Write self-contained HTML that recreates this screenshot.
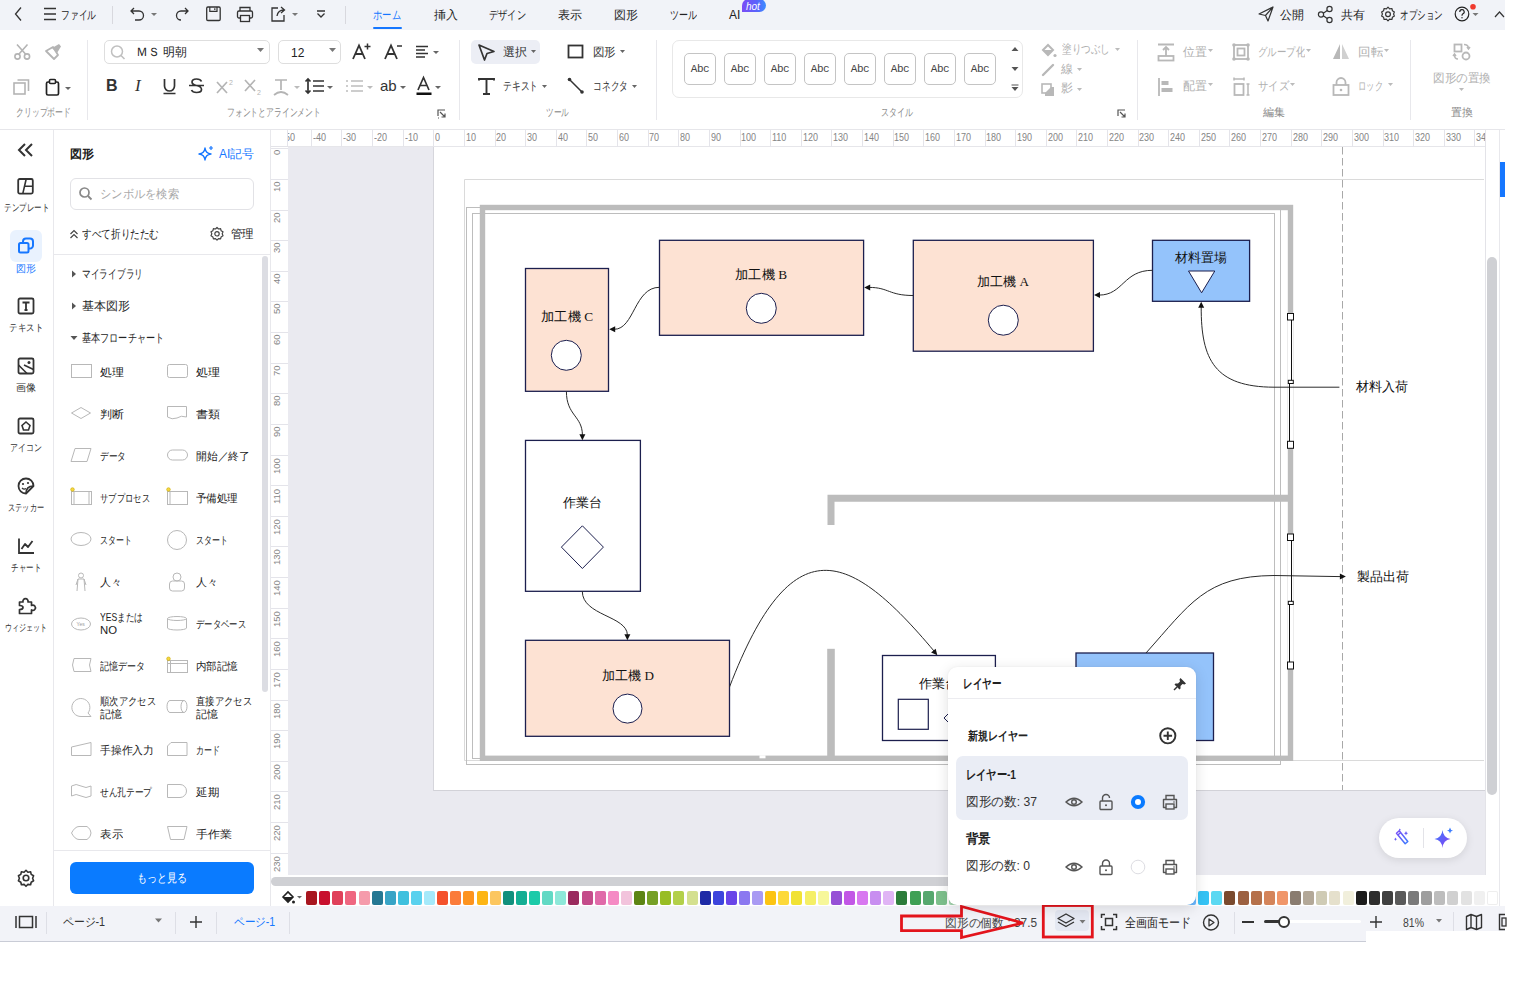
<!DOCTYPE html>
<html><head><meta charset="utf-8">
<style>
*{box-sizing:border-box;margin:0;padding:0}
html,body{width:1513px;height:992px;overflow:hidden;background:#fff;font-family:"Liberation Sans",sans-serif;color:#333}
.a{position:absolute}
.t{position:absolute;white-space:nowrap;line-height:1}
svg{position:absolute;overflow:visible}
#top{left:0;top:0;width:1505px;height:30px;background:#f1f3f8}
#rib{left:0;top:30px;width:1505px;height:100px;background:#fff;border-bottom:1px solid #e6e6ea}
#side{left:0;top:130px;width:54px;height:776px;background:#fff;border-right:1px solid #e8e8ec}
#panel{left:54px;top:130px;width:217px;height:776px;background:#fff;border-right:1px solid #e8e8ec}
#rulT{left:271px;top:129px;width:1214px;height:19px;background:#fff;border-top:1px solid #e6e6ea;border-bottom:2px solid #e6e6ea}
#rulL{left:271px;top:147px;width:18px;height:728px;background:#fff;border-right:1px solid #e3e3e8}
#cv{left:288px;top:147px;width:1197px;height:728px;background:#eaeaf0}
#page{left:433px;top:147px;width:1052px;height:644px;background:#fff;border-left:1px solid #d6d6dc;border-bottom:1px solid #d2d2d8}
#vsb{left:1485px;top:147px;width:14px;height:728px;background:#fff}
#rp{left:1499px;top:130px;width:6px;height:776px;background:#fff;border-left:1px solid #e8e8ec}
#hsb{left:271px;top:875px;width:1214px;height:14px;background:#fff}
#pal{left:271px;top:889px;width:1228px;height:17px;background:#fff}
#stat{left:0;top:906px;width:1505px;height:36px;background:#f2f3f8;border-bottom:1px solid #c9ccd6}
.m13{font-size:12px;color:#222}
.r12{font-size:12px;color:#333}
.dd{position:absolute;width:0;height:0;border-left:3px solid transparent;border-right:3px solid transparent;border-top:4px solid #666}
.lbl{font-size:11px;color:#8a8a8a}
.dis{color:#b0b0b0}
</style></head><body>

<div id="top" class="a"></div>
<!-- back chevron -->
<svg style="left:0;top:0" width="30" height="30"><path d="M21 7.5 L15.5 14 L21 20.5" fill="none" stroke="#333" stroke-width="1.3"/></svg>
<svg style="left:40px;top:0" width="20" height="30"><path d="M4 8.5H16M4 14H16M4 19.5H16" stroke="#333" stroke-width="1.4"/></svg>
<div class="t m13" style="left:61px;top:9px;transform:scaleX(0.729);transform-origin:0 0" id="tw1">ファイル</div>
<div class="a" style="left:112px;top:6px;width:1px;height:18px;background:#d8d8de"></div>
<svg style="left:128px;top:0" width="40" height="30"><path d="M6 8 L3 11 L6 14 M3 11 H11 A4.5 4.5 0 0 1 11 20 H7" fill="none" stroke="#333" stroke-width="1.3"/><path d="M23 13 l3 3 l3 -3z" fill="#777"/></svg>
<svg style="left:172px;top:0" width="20" height="30"><path d="M13 8 L16 11 L13 14 M16 11 H9 A4.5 4.5 0 0 0 9 20" fill="none" stroke="#333" stroke-width="1.3"/></svg>
<svg style="left:204px;top:0" width="20" height="30"><rect x="2.7" y="7" width="13.5" height="13.5" rx="1.2" fill="none" stroke="#333" stroke-width="1.3"/><path d="M5.8 7 V11.3 H13 V7 M10.8 8.3 V10" fill="none" stroke="#333" stroke-width="1.2"/></svg>
<svg style="left:235px;top:0" width="20" height="30"><path d="M5 11V7.5H15V11" fill="none" stroke="#333" stroke-width="1.3"/><rect x="2.5" y="11" width="15" height="7" rx="1.5" fill="none" stroke="#333" stroke-width="1.3"/><rect x="5.5" y="15.5" width="9" height="6" fill="#f1f3f8" stroke="#333" stroke-width="1.3"/></svg>
<svg style="left:268px;top:0" width="34" height="30"><path d="M10 8 H4 V21 H16 V15" fill="none" stroke="#333" stroke-width="1.3"/><path d="M9 16 Q10 10 16 10 M13 7 L16.5 10 L13 13" fill="none" stroke="#333" stroke-width="1.3"/><path d="M24 13 l3 3 l3 -3z" fill="#777"/></svg>
<svg style="left:313px;top:0" width="16" height="30"><path d="M4 11 H12 M4.5 13.5 L8 17 L11.5 13.5" fill="none" stroke="#333" stroke-width="1.3"/></svg>
<div class="a" style="left:345px;top:6px;width:1px;height:18px;background:#d8d8de"></div>
<div class="t m13" style="left:373px;top:9px;color:#1677ff;transform:scaleX(0.778);transform-origin:0 0" id="tw2">ホーム</div>
<div class="a" style="left:373px;top:27px;width:29px;height:2px;background:#1677ff;border-radius:1px"></div>
<div class="t m13" style="left:434px;top:9px">挿入</div>
<div class="t m13" style="left:489px;top:9px;transform:scaleX(0.771);transform-origin:0 0" id="tw3">デザイン</div>
<div class="t m13" style="left:558px;top:9px">表示</div>
<div class="t m13" style="left:614px;top:9px">図形</div>
<div class="t m13" style="left:670px;top:9px;transform:scaleX(0.750);transform-origin:0 0" id="tw4">ツール</div>
<div class="t m13" style="left:729px;top:9px">AI</div>
<div class="a" style="left:742px;top:-1px;width:24px;height:13px;background:linear-gradient(90deg,#7b4df6,#5a62fb 60%,#3b8dff);border-radius:7px 7px 7px 0"></div>
<div class="t" style="left:746px;top:1.5px;font-size:10px;font-style:italic;color:#fff">hot</div>
<!-- right -->
<svg style="left:1256px;top:0" width="20" height="30"><path d="M3 14 L17 7 L12 21 L9.5 15.5 Z M9.5 15.5 L17 7" fill="none" stroke="#333" stroke-width="1.2" stroke-linejoin="round"/></svg>
<div class="t m13" style="left:1280px;top:9px">公開</div>
<svg style="left:1316px;top:0" width="20" height="30"><circle cx="5" cy="14.5" r="2.6" fill="none" stroke="#333" stroke-width="1.2"/><circle cx="13.5" cy="9" r="2.6" fill="none" stroke="#333" stroke-width="1.2"/><circle cx="13.5" cy="20" r="2.6" fill="none" stroke="#333" stroke-width="1.2"/><path d="M7.3 13.2 L11.2 10.4 M7.3 15.8 L11.2 18.6" stroke="#333" stroke-width="1.2"/></svg>
<div class="t m13" style="left:1341px;top:9px">共有</div>
<svg style="left:1378px;top:0" width="20" height="30"><path d="M10 7.2 l1.6 1.6 2.3-.3 .5 2.2 2 1.2-.8 2.1 .8 2.1-2 1.2-.5 2.2-2.3-.3-1.6 1.6-1.6-1.6-2.3.3-.5-2.2-2-1.2 .8-2.1-.8-2.1 2-1.2 .5-2.2 2.3 .3z" fill="none" stroke="#333" stroke-width="1.2" stroke-linejoin="round"/><circle cx="10" cy="14.2" r="2.4" fill="none" stroke="#333" stroke-width="1.2"/></svg>
<div class="t m13" style="left:1400px;top:9px;transform:scaleX(0.717);transform-origin:0 0" id="tw5">オプション</div>
<svg style="left:1450px;top:0" width="34" height="30"><circle cx="12" cy="14" r="6.8" fill="none" stroke="#222" stroke-width="1.2"/><path d="M9.8 12 A2.2 2.2 0 1 1 12.6 14 Q12 14.5 12 15.8" fill="none" stroke="#222" stroke-width="1.2"/><circle cx="12" cy="17.8" r=".7" fill="#222"/><circle cx="23" cy="6.7" r="2.8" fill="#f03a2e"/><path d="M22.5 13 l3 3 l3 -3z" fill="#777"/></svg>
<svg style="left:1494px;top:0" width="12" height="30"><path d="M1 17 L5.5 12 L10 17" fill="none" stroke="#333" stroke-width="1.2"/></svg>

<div id="rib" class="a"></div>
<!-- clipboard -->
<svg style="left:12px;top:42px" width="22" height="20"><circle cx="5.5" cy="14.5" r="2.6" fill="none" stroke="#b4b4b4" stroke-width="1.6"/><circle cx="15" cy="14.5" r="2.6" fill="none" stroke="#b4b4b4" stroke-width="1.6"/><path d="M6.8 12.3 L15.5 2.5 M13.7 12.3 L5 2.5" stroke="#b4b4b4" stroke-width="1.6"/></svg>
<svg style="left:43px;top:42px" width="22" height="20"><path d="M3 9 L10 5 L15 13 L11 17 Z" fill="none" stroke="#b4b4b4" stroke-width="1.8" stroke-linejoin="round"/><path d="M9 6 L16 2 L18 4.5 L14 11 Z" fill="#b4b4b4"/></svg>
<svg style="left:12px;top:77px" width="20" height="20"><rect x="2" y="6" width="11" height="11" fill="none" stroke="#b4b4b4" stroke-width="1.6"/><path d="M5.5 3 H16.5 V14" fill="none" stroke="#b4b4b4" stroke-width="1.6"/></svg>
<svg style="left:44px;top:77px" width="30" height="20"><rect x="2.5" y="5" width="12" height="13" rx="1.5" fill="none" stroke="#222" stroke-width="1.7"/><rect x="5.5" y="2.5" width="6" height="4" rx="1" fill="#fff" stroke="#222" stroke-width="1.6"/><path d="M21 10 l3 3 l3-3z" fill="#666"/></svg>
<div class="t lbl" style="left:16px;top:107px;transform:scaleX(0.714);transform-origin:0 0" id="tw6">クリップボード</div>
<div class="a" style="left:87px;top:40px;width:1px;height:80px;background:#e8e8ec"></div>
<!-- font -->
<div class="a" style="left:104px;top:40px;width:166px;height:24px;border:1px solid #dedede;border-radius:5px"></div>
<svg style="left:108px;top:42px" width="20" height="20"><circle cx="9" cy="9.5" r="5.5" fill="none" stroke="#c0c0c0" stroke-width="1.5"/><path d="M13 13.5 L16.5 17" stroke="#c0c0c0" stroke-width="1.6"/></svg>
<div class="t r12" style="left:136px;top:46px;color:#222;transform:scaleX(0.993);transform-origin:0 0" id="tw7">ＭＳ 明朝</div>
<svg style="left:256px;top:46px" width="10" height="8"><path d="M1 2 h7 l-3.5 4z" fill="#777"/></svg>
<div class="a" style="left:278px;top:40px;width:63px;height:24px;border:1px solid #dedede;border-radius:5px"></div>
<div class="t r12" style="left:291px;top:47px;color:#222">12</div>
<svg style="left:328px;top:46px" width="10" height="8"><path d="M1 2 h7 l-3.5 4z" fill="#777"/></svg>
<svg style="left:350px;top:42px" width="24" height="20"><path d="M3 17 L9 3.5 L15 17 M5.5 12 H12.5" fill="none" stroke="#333" stroke-width="1.8"/><path d="M17.5 1.5 v6 M14.5 4.5 h6" stroke="#333" stroke-width="1.5"/></svg>
<svg style="left:382px;top:42px" width="24" height="20"><path d="M3 17 L9 3.5 L15 17 M5.5 12 H12.5" fill="none" stroke="#333" stroke-width="1.8"/><path d="M15 4 h5" stroke="#333" stroke-width="1.5"/></svg>
<svg style="left:414px;top:42px" width="30" height="20"><path d="M2 4.5 H14 M2 8 H11 M2 11.5 H14 M2 15 H11" stroke="#333" stroke-width="1.6"/><path d="M19 9 l3 3 l3-3z" fill="#666"/></svg>
<!-- row2 -->
<div class="t" style="left:106px;top:78px;font-size:16px;font-weight:bold;color:#333">B</div>
<div class="t" style="left:135px;top:77px;font-size:17px;font-style:italic;font-family:'Liberation Serif',serif;color:#333">I</div>
<svg style="left:160px;top:76px" width="20" height="20"><path d="M4.5 3 V10 A5 5 0 0 0 14.5 10 V3 M3.5 17.5 H15.5" fill="none" stroke="#333" stroke-width="1.7"/></svg>
<svg style="left:187px;top:76px" width="20" height="20"><path d="M14.5 5.5 Q13.5 3 9.5 3 Q5 3 5 6 Q5 8.5 9.5 9.5 Q14.5 10.5 14.5 13.5 Q14.5 16.5 9.5 16.5 Q5.5 16.5 4.5 14 M2 9.5 H17" fill="none" stroke="#333" stroke-width="1.7"/></svg>
<svg style="left:214px;top:76px" width="22" height="20"><path d="M3 6 L13 17 M13 6 L3 17" stroke="#b4b4b4" stroke-width="1.7"/><text x="15" y="9" font-size="7" fill="#b4b4b4" font-family="Liberation Sans">2</text></svg>
<svg style="left:242px;top:76px" width="22" height="20"><path d="M3 4 L13 15 M13 4 L3 15" stroke="#b4b4b4" stroke-width="1.7"/><text x="15" y="19" font-size="7" fill="#b4b4b4" font-family="Liberation Sans">2</text></svg>
<svg style="left:272px;top:76px" width="30" height="22"><path d="M3 4 H15 M9 4 V14 M2 19 Q9 13 16 19" fill="none" stroke="#b4b4b4" stroke-width="1.7"/><path d="M22 10 l3 3 l3-3z" fill="#bbb"/></svg>
<svg style="left:304px;top:76px" width="30" height="22"><path d="M4 3 V17 M1.5 5.5 L4 3 L6.5 5.5 M1.5 14.5 L4 17 L6.5 14.5 M9 5 H20 M9 10 H20 M9 15 H20" fill="none" stroke="#333" stroke-width="1.7"/><path d="M23 10 l3 3 l3-3z" fill="#666"/></svg>
<svg style="left:343px;top:76px" width="30" height="22"><path d="M3 5 H5 M3 10 H5 M3 15 H5 M8 5 H20 M8 10 H20 M8 15 H20" fill="none" stroke="#bdbdbd" stroke-width="1.7"/><path d="M24 10 l3 3 l3-3z" fill="#bbb"/></svg>
<div class="t" style="left:380px;top:78px;font-size:15px;color:#333">ab</div>
<svg style="left:398px;top:76px" width="10" height="20"><path d="M2 10 l3 3 l3-3z" fill="#666"/></svg>
<svg style="left:414px;top:74px" width="30" height="24"><path d="M4 16 L9.5 3.5 L15 16 M6 11.5 H13" fill="none" stroke="#333" stroke-width="1.7"/><rect x="2.5" y="18.5" width="15" height="2.5" fill="#111"/><path d="M21 12 l3 3 l3-3z" fill="#666"/></svg>
<div class="t lbl" style="left:227px;top:107px;transform:scaleX(0.712);transform-origin:0 0" id="tw8">フォントとアラインメント</div>
<svg style="left:436px;top:108px" width="12" height="12"><path d="M2 8 V2 H9 M4 4 L9 9 M9 5.5 V9 H5.5 M2 10 H3" fill="none" stroke="#555" stroke-width="1.2"/></svg>
<div class="a" style="left:459px;top:40px;width:1px;height:80px;background:#e8e8ec"></div>
<!-- tools -->
<div class="a" style="left:471px;top:40px;width:69px;height:24px;background:#eceef5;border-radius:5px"></div>
<svg style="left:476px;top:42px" width="22" height="20"><path d="M3 3 L18 9.5 L11 11.5 L8.5 18 Z" fill="none" stroke="#333" stroke-width="1.7" stroke-linejoin="round"/></svg>
<div class="t r12" style="left:503px;top:46px;transform:scaleX(1.000);transform-origin:0 0" id="tw9">選択</div>
<svg style="left:530px;top:48px" width="8" height="8"><path d="M1 2 h5 l-2.5 3z" fill="#666"/></svg>
<svg style="left:565px;top:42px" width="22" height="20"><rect x="3.5" y="3.5" width="14" height="12" fill="none" stroke="#333" stroke-width="1.8"/></svg>
<div class="t r12" style="left:593px;top:46px;transform:scaleX(0.958);transform-origin:0 0" id="tw10">図形</div>
<svg style="left:619px;top:48px" width="8" height="8"><path d="M1 2 h5 l-2.5 3z" fill="#666"/></svg>
<svg style="left:476px;top:76px" width="22" height="22"><path d="M3 4.5 V3 H18 V4.5 M10.5 3 V18 M7 18 H14" fill="none" stroke="#333" stroke-width="1.9"/></svg>
<div class="t r12" style="left:503px;top:80px;transform:scaleX(0.729);transform-origin:0 0" id="tw11">テキスト</div>
<svg style="left:541px;top:83px" width="8" height="8"><path d="M1 2 h5 l-2.5 3z" fill="#666"/></svg>
<svg style="left:566px;top:76px" width="22" height="22"><path d="M3.5 3.5 L16 16" stroke="#333" stroke-width="1.5"/><circle cx="3.5" cy="3.5" r="1.8" fill="#333"/><circle cx="16" cy="16" r="1.8" fill="#333"/></svg>
<div class="t r12" style="left:593px;top:80px;transform:scaleX(0.729);transform-origin:0 0" id="tw12">コネクタ</div>
<svg style="left:631px;top:83px" width="8" height="8"><path d="M1 2 h5 l-2.5 3z" fill="#666"/></svg>
<div class="t lbl" style="left:546px;top:107px;transform:scaleX(0.697);transform-origin:0 0" id="tw13">ツール</div>
<div class="a" style="left:656px;top:40px;width:1px;height:80px;background:#e8e8ec"></div>
<!-- style -->
<div class="a" style="left:672px;top:40px;width:351px;height:58px;border:1px solid #e8e8e8;border-radius:7px"></div>
<div class="a" style="left:684px;top:53px;width:32px;height:32px;border:1px solid #c4c4c4;border-radius:5px;font-family:'Liberation Mono',monospace;font-size:11px;color:#444;text-align:center;line-height:30px;letter-spacing:-0.5px">Abc</div><div class="a" style="left:724px;top:53px;width:32px;height:32px;border:1px solid #c4c4c4;border-radius:5px;font-family:'Liberation Mono',monospace;font-size:11px;color:#444;text-align:center;line-height:30px;letter-spacing:-0.5px">Abc</div><div class="a" style="left:764px;top:53px;width:32px;height:32px;border:1px solid #c4c4c4;border-radius:5px;font-family:'Liberation Mono',monospace;font-size:11px;color:#444;text-align:center;line-height:30px;letter-spacing:-0.5px">Abc</div><div class="a" style="left:804px;top:53px;width:32px;height:32px;border:1px solid #c4c4c4;border-radius:5px;font-family:'Liberation Mono',monospace;font-size:11px;color:#444;text-align:center;line-height:30px;letter-spacing:-0.5px">Abc</div><div class="a" style="left:844px;top:53px;width:32px;height:32px;border:1px solid #c4c4c4;border-radius:5px;font-family:'Liberation Mono',monospace;font-size:11px;color:#444;text-align:center;line-height:30px;letter-spacing:-0.5px">Abc</div><div class="a" style="left:884px;top:53px;width:32px;height:32px;border:1px solid #c4c4c4;border-radius:5px;font-family:'Liberation Mono',monospace;font-size:11px;color:#444;text-align:center;line-height:30px;letter-spacing:-0.5px">Abc</div><div class="a" style="left:924px;top:53px;width:32px;height:32px;border:1px solid #c4c4c4;border-radius:5px;font-family:'Liberation Mono',monospace;font-size:11px;color:#444;text-align:center;line-height:30px;letter-spacing:-0.5px">Abc</div><div class="a" style="left:964px;top:53px;width:32px;height:32px;border:1px solid #c4c4c4;border-radius:5px;font-family:'Liberation Mono',monospace;font-size:11px;color:#444;text-align:center;line-height:30px;letter-spacing:-0.5px">Abc</div>
<svg style="left:1010px;top:44px" width="10" height="50"><path d="M1.5 7 h7 l-3.5 -4z M1.5 23 h7 l-3.5 4z M1.5 41 h7 M1.5 43 h7 l-3.5 4z" fill="#555" stroke="none"/><path d="M1.5 41 h7" stroke="#555" stroke-width="1"/></svg>
<svg style="left:1040px;top:42px" width="18" height="18"><path d="M3 8 L8 3 L13 8 L8 13 Z" fill="none" stroke="#b8b8b8" stroke-width="2"/><path d="M3 8 H13 L8 13Z" fill="#b8b8b8"/><circle cx="15" cy="13.5" r="1.6" fill="#b8b8b8"/></svg>
<div class="t r12 dis" style="left:1062px;top:43px;transform:scaleX(0.800);transform-origin:0 0" id="tw14">塗りつぶし</div>
<svg style="left:1114px;top:46px" width="8" height="8"><path d="M1 2 h5 l-2.5 3z" fill="#bbb"/></svg>
<svg style="left:1040px;top:62px" width="18" height="16"><path d="M3 13 L13 3" stroke="#b8b8b8" stroke-width="2.4" stroke-linecap="round"/></svg>
<div class="t r12 dis" style="left:1061px;top:63px">線</div>
<svg style="left:1076px;top:66px" width="8" height="8"><path d="M1 2 h5 l-2.5 3z" fill="#bbb"/></svg>
<svg style="left:1040px;top:82px" width="18" height="16"><rect x="2" y="2" width="9" height="9" fill="none" stroke="#b8b8b8" stroke-width="1.6"/><path d="M11 5 H14 V14 H5 V11" fill="#b8b8b8"/></svg>
<div class="t r12 dis" style="left:1061px;top:82px">影</div>
<svg style="left:1076px;top:86px" width="8" height="8"><path d="M1 2 h5 l-2.5 3z" fill="#bbb"/></svg>
<div class="t lbl" style="left:881px;top:107px;transform:scaleX(0.727);transform-origin:0 0" id="tw15">スタイル</div>
<svg style="left:1116px;top:108px" width="12" height="12"><path d="M2 8 V2 H9 M4 4 L9 9 M9 5.5 V9 H5.5" fill="none" stroke="#555" stroke-width="1.2"/></svg>
<div class="a" style="left:1137px;top:40px;width:1px;height:80px;background:#e8e8ec"></div>
<!-- edit -->
<svg style="left:1156px;top:42px" width="20" height="20"><path d="M2 2.5 H18 M10 14 V5.5 M7 8 L10 5 L13 8" fill="none" stroke="#b8b8b8" stroke-width="1.8"/><rect x="2.5" y="14" width="15" height="4.5" fill="none" stroke="#b8b8b8" stroke-width="1.8"/></svg>
<div class="t r12 dis" style="left:1183px;top:46px;transform:scaleX(1.000);transform-origin:0 0" id="tw16">位置</div>
<svg style="left:1207px;top:47px" width="8" height="8"><path d="M1 2 h5 l-2.5 3z" fill="#bbb"/></svg>
<svg style="left:1231px;top:42px" width="20" height="20"><rect x="3" y="3" width="14" height="14" fill="none" stroke="#b8b8b8" stroke-width="1.8"/><rect x="6.5" y="6.5" width="7" height="7" fill="none" stroke="#b8b8b8" stroke-width="1.8"/><circle cx="3" cy="3" r="1.8" fill="#b8b8b8"/><circle cx="17" cy="3" r="1.8" fill="#b8b8b8"/><circle cx="3" cy="17" r="1.8" fill="#b8b8b8"/><circle cx="17" cy="17" r="1.8" fill="#b8b8b8"/></svg>
<div class="t r12 dis" style="left:1258px;top:46px;transform:scaleX(0.783);transform-origin:0 0" id="tw17">グループ化</div>
<svg style="left:1305px;top:47px" width="8" height="8"><path d="M1 2 h5 l-2.5 3z" fill="#bbb"/></svg>
<svg style="left:1331px;top:42px" width="20" height="20"><path d="M9 2 V17 H2 Z" fill="#b8b8b8"/><path d="M11 2 V17 H18 Z" fill="#d0d0d0"/></svg>
<div class="t r12 dis" style="left:1358px;top:46px;transform:scaleX(1.042);transform-origin:0 0" id="tw18">回転</div>
<svg style="left:1383px;top:47px" width="8" height="8"><path d="M1 2 h5 l-2.5 3z" fill="#bbb"/></svg>
<svg style="left:1156px;top:76px" width="20" height="22"><path d="M3 2 V20" stroke="#b8b8b8" stroke-width="1.8"/><rect x="5.5" y="5" width="7" height="4" fill="#b8b8b8"/><rect x="5.5" y="12" width="11" height="4" fill="#b8b8b8"/></svg>
<div class="t r12 dis" style="left:1183px;top:80px;transform:scaleX(1.000);transform-origin:0 0" id="tw19">配置</div>
<svg style="left:1207px;top:81px" width="8" height="8"><path d="M1 2 h5 l-2.5 3z" fill="#bbb"/></svg>
<svg style="left:1232px;top:76px" width="20" height="22"><path d="M2 3 H12 M2 1.5 V4.5 M12 1.5 V4.5" stroke="#b8b8b8" stroke-width="1.5"/><rect x="2.5" y="8" width="9" height="11" fill="none" stroke="#b8b8b8" stroke-width="1.8"/><path d="M16 8 V19 M14.5 8 H17.5 M14.5 19 H17.5" stroke="#b8b8b8" stroke-width="1.5"/></svg>
<div class="t r12 dis" style="left:1258px;top:80px;transform:scaleX(0.861);transform-origin:0 0" id="tw20">サイズ</div>
<svg style="left:1289px;top:81px" width="8" height="8"><path d="M1 2 h5 l-2.5 3z" fill="#bbb"/></svg>
<svg style="left:1331px;top:76px" width="20" height="22"><path d="M5.5 9 V6.5 A4.5 4.5 0 0 1 14.5 6.5 V9" fill="none" stroke="#b8b8b8" stroke-width="1.8"/><rect x="2.5" y="9" width="15" height="10" fill="none" stroke="#b8b8b8" stroke-width="1.8"/><circle cx="10" cy="14" r="1.3" fill="#b8b8b8"/></svg>
<div class="t r12 dis" style="left:1358px;top:80px;transform:scaleX(0.694);transform-origin:0 0" id="tw21">ロック</div>
<svg style="left:1387px;top:81px" width="8" height="8"><path d="M1 2 h5 l-2.5 3z" fill="#bbb"/></svg>
<div class="t lbl" style="left:1263px;top:107px;transform:scaleX(1.000);transform-origin:0 0" id="tw22">編集</div>
<div class="a" style="left:1410px;top:40px;width:1px;height:80px;background:#e8e8ec"></div>
<svg style="left:1452px;top:42px" width="22" height="20"><rect x="2.5" y="2.5" width="7" height="7" fill="none" stroke="#b8b8b8" stroke-width="1.8"/><circle cx="14" cy="14" r="3.5" fill="none" stroke="#b8b8b8" stroke-width="1.8"/><path d="M12 2.5 Q16 2.5 16.5 6 M15 5 L16.5 7 L18 5 M6 17 Q2.5 17 2.5 13 M4 14 L2.5 12 L1 14" fill="none" stroke="#b8b8b8" stroke-width="1.5"/></svg>
<div class="t r12 dis" style="left:1433px;top:72px;transform:scaleX(0.967);transform-origin:0 0" id="tw23">図形の置換</div>
<svg style="left:1458px;top:86px" width="8" height="8"><path d="M1 2 h5 l-2.5 3z" fill="#bbb"/></svg>
<div class="t lbl" style="left:1451px;top:107px;transform:scaleX(1.000);transform-origin:0 0" id="tw24">置換</div>

<div id="side" class="a"></div>
<svg style="left:16px;top:142px" width="20" height="16"><path d="M9 2 L3 8 L9 14 M16 2 L10 8 L16 14" fill="none" stroke="#333" stroke-width="2"/></svg>
<svg style="left:16px;top:176px" width="20" height="20"><rect x="2.2" y="3" width="14.6" height="14.6" rx="1.5" fill="none" stroke="#333" stroke-width="1.8"/><path d="M10.2 3 L6.8 17.6 M8.6 10.3 H16.8" fill="none" stroke="#333" stroke-width="1.6"/></svg>
<div class="t" style="left:4px;top:203px;font-size:10px;color:#333;transform:scaleX(0.750);transform-origin:0 0" id="tw25">テンプレート</div>
<div class="a" style="left:10px;top:230px;width:32px;height:32px;background:#e9f2fe;border-radius:6px"></div>
<svg style="left:16px;top:236px" width="20" height="20"><rect x="3" y="7" width="9.5" height="9.5" rx="1.5" fill="none" stroke="#1677ff" stroke-width="2"/><path d="M7 7 V5.5 A3 3 0 0 1 10 2.5 H14 A3 3 0 0 1 17 5.5 V9.5 A3 3 0 0 1 14 12.5 H12.5" fill="none" stroke="#1677ff" stroke-width="2"/></svg>
<div class="t" style="left:16px;top:264px;font-size:10px;color:#1677ff;transform:scaleX(1.000);transform-origin:0 0" id="tw26">図形</div>
<svg style="left:16px;top:296px" width="20" height="20"><rect x="2.5" y="2.5" width="15" height="15" rx="1.5" fill="none" stroke="#333" stroke-width="1.8"/><path d="M6.5 6.5 H13.5 M10 6.5 V14 M8.5 14 H11.5" fill="none" stroke="#333" stroke-width="1.8"/></svg>
<div class="t" style="left:9px;top:323px;font-size:10px;color:#333;transform:scaleX(0.850);transform-origin:0 0" id="tw27">テキスト</div>
<svg style="left:16px;top:356px" width="20" height="20"><rect x="2.5" y="2.5" width="15" height="15" rx="1.5" fill="none" stroke="#333" stroke-width="1.8"/><path d="M2.5 9 L11 17.5 M8 9 L17.5 13.5" fill="none" stroke="#333" stroke-width="1.6"/><circle cx="13" cy="6.5" r="1.5" fill="#333"/></svg>
<div class="t" style="left:16px;top:383px;font-size:10px;color:#333;transform:scaleX(1.000);transform-origin:0 0" id="tw28">画像</div>
<svg style="left:16px;top:416px" width="20" height="20"><rect x="2.5" y="2.5" width="15" height="15" rx="1.5" fill="none" stroke="#333" stroke-width="1.8"/><path d="M10 6 L14 9.5 L12.5 14 H7.5 L6 9.5 Z" fill="none" stroke="#333" stroke-width="1.6"/></svg>
<div class="t" style="left:10px;top:443px;font-size:10px;color:#333;transform:scaleX(0.800);transform-origin:0 0" id="tw29">アイコン</div>
<svg style="left:16px;top:476px" width="20" height="20"><path d="M17.5 10 A7.5 7.5 0 1 0 10 17.5 L17.5 10 Z" fill="none" stroke="#333" stroke-width="1.8" stroke-linejoin="round"/><path d="M10 17.5 Q10 10 17.5 10" fill="none" stroke="#333" stroke-width="1.6"/><circle cx="7" cy="8" r="1.1" fill="#333"/><circle cx="12" cy="7" r="1.1" fill="#333"/><path d="M6 12 Q8 14 10 12.5" fill="none" stroke="#333" stroke-width="1.3"/></svg>
<div class="t" style="left:8px;top:503px;font-size:10px;color:#333;transform:scaleX(0.720);transform-origin:0 0" id="tw30">ステッカー</div>
<svg style="left:16px;top:536px" width="20" height="20"><path d="M3 2.5 V17 H18" fill="none" stroke="#333" stroke-width="1.8"/><path d="M5.5 13 L9 8 L12 11 L16.5 5" fill="none" stroke="#333" stroke-width="1.8" stroke-linejoin="round"/></svg>
<div class="t" style="left:11px;top:563px;font-size:10px;color:#333;transform:scaleX(0.750);transform-origin:0 0" id="tw31">チャート</div>
<svg style="left:16px;top:596px" width="20" height="20"><path d="M3.5 6 H7 A2.6 2.6 0 1 1 12 6 H15.5 V9.5 A2.6 2.6 0 1 1 15.5 14 V17.5 H3.5 V13.5 Q7 13.5 7 11.5 Q7 9.5 3.5 9.5 Z" fill="none" stroke="#333" stroke-width="1.7" stroke-linejoin="round"/></svg>
<div class="t" style="left:5px;top:623px;font-size:10px;color:#333;transform:scaleX(0.700);transform-origin:0 0" id="tw32">ウィジェット</div>
<svg style="left:16px;top:868px" width="20" height="20"><path d="M10 2.3 l1.9 1.9 2.7-.4 .6 2.6 2.4 1.4-1 2.5 1 2.5-2.4 1.4-.6 2.6-2.7-.4-1.9 1.9-1.9-1.9-2.7.4-.6-2.6-2.4-1.4 1-2.5-1-2.5 2.4-1.4 .6-2.6 2.7 .4z" fill="none" stroke="#333" stroke-width="1.6" stroke-linejoin="round"/><circle cx="10" cy="10" r="2.8" fill="none" stroke="#333" stroke-width="1.6"/></svg>

<div id="panel" class="a"></div>
<div class="t" style="left:70px;top:148px;font-size:12px;color:#222;font-weight:bold;transform:scaleX(1.000);transform-origin:0 0" id="tw33">図形</div>
<svg style="left:197px;top:145px" width="18" height="18"><path d="M8 3 Q8.6 8.4 14 9 Q8.6 9.6 8 15 Q7.4 9.6 2 9 Q7.4 8.4 8 3Z" fill="none" stroke="#1677ff" stroke-width="1.4" stroke-linejoin="round"/><path d="M14 1 v4 M12 3 h4" stroke="#1677ff" stroke-width="1.2"/></svg>
<div class="t" style="left:219px;top:148px;font-size:12px;color:#1677ff;transform:scaleX(0.990);transform-origin:0 0" id="tw34">AI記号</div>
<div class="a" style="left:70px;top:178px;width:184px;height:32px;border:1px solid #e2e2e6;border-radius:6px"></div>
<svg style="left:78px;top:186px" width="16" height="16"><circle cx="6.5" cy="6.5" r="4.5" fill="none" stroke="#888" stroke-width="1.7"/><path d="M10 10 L13.5 13.5" stroke="#888" stroke-width="1.8"/></svg>
<div class="t" style="left:100px;top:188px;font-size:12px;color:#aaa;transform:scaleX(0.940);transform-origin:0 0" id="tw35">シンボルを検索</div>
<svg style="left:68px;top:228px" width="12" height="12"><path d="M2.5 6 L6 2.5 L9.5 6 M2.5 10 L6 6.5 L9.5 10" fill="none" stroke="#444" stroke-width="1.2"/></svg>
<div class="t" style="left:82px;top:228px;font-size:12px;color:#222;transform:scaleX(0.802);transform-origin:0 0" id="tw36">すべて折りたたむ</div>
<svg style="left:209px;top:226px" width="16" height="16"><path d="M8 1.5 l1.5 1.5 2.1-.3 .5 2 1.9 1.1-.8 2 .8 2-1.9 1.1-.5 2-2.1-.3-1.5 1.5-1.5-1.5-2.1.3-.5-2-1.9-1.1 .8-2-.8-2 1.9-1.1 .5-2 2.1 .3z" fill="none" stroke="#444" stroke-width="1.2" stroke-linejoin="round"/><circle cx="8" cy="7.8" r="2.2" fill="none" stroke="#444" stroke-width="1.2"/></svg>
<div class="t" style="left:231px;top:228px;font-size:12px;color:#222;transform:scaleX(0.958);transform-origin:0 0" id="tw37">管理</div>
<div class="a" style="left:54px;top:254px;width:216px;height:1px;background:#e8e8ec"></div>
<div class="a" style="left:262px;top:256px;width:6px;height:436px;background:#dcdde3;border-radius:3px"></div>
<svg style="left:70px;top:269px" width="8" height="10"><path d="M2 1.5 L6 5 L2 8.5z" fill="#555"/></svg>
<div class="t" style="left:82px;top:268px;font-size:12px;color:#222;transform:scaleX(0.726);transform-origin:0 0" id="tw38">マイライブラリ</div>
<svg style="left:70px;top:301px" width="8" height="10"><path d="M2 1.5 L6 5 L2 8.5z" fill="#555"/></svg>
<div class="t" style="left:82px;top:300px;font-size:12px;color:#222;transform:scaleX(1.000);transform-origin:0 0" id="tw39">基本図形</div>
<svg style="left:69px;top:334px" width="10" height="8"><path d="M1.5 2 L8.5 2 L5 6z" fill="#555"/></svg>
<div class="t" style="left:82px;top:332px;font-size:12px;color:#222;transform:scaleX(0.759);transform-origin:0 0" id="tw40">基本フローチャート</div>
<svg style="left:70px;top:363px" width="24" height="20"><rect x="1.5" y="1.5" width="20" height="13" fill="none" stroke="#b8b8b8"/></svg>
<svg style="left:166px;top:363px" width="24" height="20"><rect x="1.5" y="1.5" width="20" height="13" rx="2" fill="none" stroke="#b8b8b8"/></svg>
<div class="t" style="left:100px;top:367px;font-size:11px;color:#222;transform:scaleX(1.091);transform-origin:0 0" id="tw41">処理</div>
<div class="t" style="left:196px;top:367px;font-size:11px;color:#222;transform:scaleX(1.091);transform-origin:0 0" id="tw42">処理</div>
<svg style="left:70px;top:405px" width="24" height="20"><path d="M1.5 8 L11 2.5 L20.5 8 L11 13.5Z" fill="none" stroke="#b8b8b8"/></svg>
<svg style="left:166px;top:405px" width="24" height="20"><path d="M1.5 1.5 H20.5 V12 Q15 10 11 13 Q6 15 1.5 12Z" fill="none" stroke="#b8b8b8"/></svg>
<div class="t" style="left:100px;top:409px;font-size:11px;color:#222;transform:scaleX(1.091);transform-origin:0 0" id="tw43">判断</div>
<div class="t" style="left:196px;top:409px;font-size:11px;color:#222;transform:scaleX(1.091);transform-origin:0 0" id="tw44">書類</div>
<svg style="left:70px;top:447px" width="24" height="20"><path d="M5 1.5 H21 L17 14.5 H1Z" fill="none" stroke="#b8b8b8"/></svg>
<svg style="left:166px;top:447px" width="24" height="20"><rect x="1.5" y="3" width="20" height="10" rx="5" fill="none" stroke="#b8b8b8"/></svg>
<div class="t" style="left:100px;top:451px;font-size:11px;color:#222;transform:scaleX(0.788);transform-origin:0 0" id="tw45">データ</div>
<div class="t" style="left:196px;top:451px;font-size:11px;color:#222;transform:scaleX(0.982);transform-origin:0 0" id="tw46">開始／終了</div>
<svg style="left:70px;top:488px" width="24" height="20"><rect x="1.5" y="3.5" width="20" height="13" fill="none" stroke="#b8b8b8"/><path d="M4 3.5 V16.5 M19 3.5 V16.5" stroke="#b8b8b8"/><circle cx="2.5" cy="1.5" r="1.8" fill="#f5d742" stroke="#c9a800" stroke-width=".6"/></svg>
<svg style="left:166px;top:488px" width="24" height="20"><rect x="1.5" y="3.5" width="20" height="13" fill="none" stroke="#b8b8b8"/><path d="M4 3.5 V16.5" stroke="#b8b8b8"/><circle cx="2.5" cy="1.5" r="1.8" fill="#f5d742" stroke="#c9a800" stroke-width=".6"/></svg>
<div class="t" style="left:100px;top:493px;font-size:11px;color:#222;transform:scaleX(0.758);transform-origin:0 0" id="tw47">サブプロセス</div>
<div class="t" style="left:196px;top:493px;font-size:11px;color:#222;transform:scaleX(0.955);transform-origin:0 0" id="tw48">予備処理</div>
<svg style="left:70px;top:531px" width="24" height="20"><ellipse cx="11" cy="8" rx="10" ry="6.5" fill="none" stroke="#b8b8b8"/></svg>
<svg style="left:166px;top:531px" width="24" height="20"><circle cx="11" cy="9" r="9.5" fill="none" stroke="#b8b8b8"/></svg>
<div class="t" style="left:100px;top:535px;font-size:11px;color:#222;transform:scaleX(0.727);transform-origin:0 0" id="tw49">スタート</div>
<div class="t" style="left:196px;top:535px;font-size:11px;color:#222;transform:scaleX(0.727);transform-origin:0 0" id="tw50">スタート</div>
<svg style="left:70px;top:572px" width="24" height="20"><circle cx="11" cy="3.5" r="2.5" fill="none" stroke="#b8b8b8"/><path d="M7 19 L8 7 H14 L15 19 M8 7 L6 13 M14 7 L16 13" fill="none" stroke="#b8b8b8"/></svg>
<svg style="left:166px;top:572px" width="24" height="20"><circle cx="11" cy="5" r="4" fill="none" stroke="#b8b8b8"/><rect x="3.5" y="9" width="15" height="10" rx="3" fill="none" stroke="#b8b8b8"/></svg>
<div class="t" style="left:100px;top:577px;font-size:11px;color:#222;transform:scaleX(1.000);transform-origin:0 0" id="tw51">人々</div>
<div class="t" style="left:196px;top:577px;font-size:11px;color:#222;transform:scaleX(1.000);transform-origin:0 0" id="tw52">人々</div>
<svg style="left:70px;top:615px" width="24" height="20"><ellipse cx="11" cy="9" rx="9.5" ry="6" fill="none" stroke="#b8b8b8"/><text x="6.5" y="11" font-size="5" fill="#999" font-family="Liberation Sans">Yes</text></svg>
<svg style="left:166px;top:615px" width="24" height="20"><ellipse cx="11" cy="3.5" rx="9.5" ry="2" fill="none" stroke="#b8b8b8"/><path d="M1.5 3.5 V13 A9.5 2 0 0 0 20.5 13 V3.5" fill="none" stroke="#b8b8b8"/></svg>
<div class="t" style="left:100px;top:612px;font-size:11px;color:#222;transform:scaleX(0.782);transform-origin:0 0" id="tw53">YESまたは</div>
<div class="t" style="left:100px;top:625px;font-size:11px;color:#222;transform:scaleX(1.030);transform-origin:0 0" id="tw54">NO</div>
<div class="t" style="left:196px;top:619px;font-size:11px;color:#222;transform:scaleX(0.758);transform-origin:0 0" id="tw55">データベース</div>
<svg style="left:70px;top:657px" width="24" height="20"><path d="M4 1.5 H21 Q18 8 21 14.5 H4 Q1 8 4 1.5Z" fill="none" stroke="#b8b8b8"/></svg>
<svg style="left:166px;top:657px" width="24" height="20"><rect x="1.5" y="3.5" width="20" height="12" fill="none" stroke="#b8b8b8"/><path d="M1.5 6.5 H21.5 M4.5 3.5 V15.5" stroke="#b8b8b8"/><circle cx="2.5" cy="1.8" r="1.8" fill="#f5d742" stroke="#c9a800" stroke-width=".6"/></svg>
<div class="t" style="left:100px;top:661px;font-size:11px;color:#222;transform:scaleX(0.818);transform-origin:0 0" id="tw56">記憶データ</div>
<div class="t" style="left:196px;top:661px;font-size:11px;color:#222;transform:scaleX(0.955);transform-origin:0 0" id="tw57">内部記憶</div>
<svg style="left:70px;top:698px" width="24" height="20"><path d="M11 18.5 A9 9 0 1 1 18 15 L21 18.5Z" fill="none" stroke="#b8b8b8"/></svg>
<svg style="left:166px;top:698px" width="24" height="20"><path d="M4 2.5 H18 A3 6 0 0 1 18 14.5 H4 A3 6 0 0 1 4 2.5Z M18 2.5 A3 6 0 0 0 18 14.5" fill="none" stroke="#b8b8b8"/></svg>
<div class="t" style="left:100px;top:696px;font-size:11px;color:#222;transform:scaleX(0.848);transform-origin:0 0" id="tw58">順次アクセス</div>
<div class="t" style="left:100px;top:709px;font-size:11px;color:#222;transform:scaleX(1.000);transform-origin:0 0" id="tw59">記憶</div>
<div class="t" style="left:196px;top:696px;font-size:11px;color:#222;transform:scaleX(0.848);transform-origin:0 0" id="tw60">直接アクセス</div>
<div class="t" style="left:196px;top:709px;font-size:11px;color:#222;transform:scaleX(1.000);transform-origin:0 0" id="tw61">記憶</div>
<svg style="left:70px;top:741px" width="24" height="20"><path d="M1.5 6 L21 1.5 V14.5 H1.5Z" fill="none" stroke="#b8b8b8"/></svg>
<svg style="left:166px;top:741px" width="24" height="20"><path d="M5 1.5 H21 V14.5 H1.5 V5Z" fill="none" stroke="#b8b8b8"/></svg>
<div class="t" style="left:100px;top:745px;font-size:11px;color:#222;transform:scaleX(0.982);transform-origin:0 0" id="tw62">手操作入力</div>
<div class="t" style="left:196px;top:745px;font-size:11px;color:#222;transform:scaleX(0.727);transform-origin:0 0" id="tw63">カード</div>
<svg style="left:70px;top:783px" width="24" height="20"><path d="M1.5 3 Q6 0 11 3 Q16 6 21 3 V13 Q16 16 11 13 Q6 10 1.5 13Z" fill="none" stroke="#b8b8b8"/></svg>
<svg style="left:166px;top:783px" width="24" height="20"><path d="M1.5 1.5 H14 A6.5 6.5 0 0 1 14 14.5 H1.5Z" fill="none" stroke="#b8b8b8"/></svg>
<div class="t" style="left:100px;top:787px;font-size:11px;color:#222;transform:scaleX(0.788);transform-origin:0 0" id="tw64">せん孔テープ</div>
<div class="t" style="left:196px;top:787px;font-size:11px;color:#222;transform:scaleX(1.045);transform-origin:0 0" id="tw65">延期</div>
<svg style="left:70px;top:825px" width="24" height="20"><path d="M1.5 8 Q5 1.5 9 1.5 H17 Q21 4 21 8 Q21 12 17 14.5 H9 Q5 14.5 1.5 8Z" fill="none" stroke="#b8b8b8"/></svg>
<svg style="left:166px;top:825px" width="24" height="20"><path d="M1.5 1.5 H21 L18 14.5 H4.5Z" fill="none" stroke="#b8b8b8"/></svg>
<div class="t" style="left:100px;top:829px;font-size:11px;color:#222;transform:scaleX(1.045);transform-origin:0 0" id="tw66">表示</div>
<div class="t" style="left:196px;top:829px;font-size:11px;color:#222;transform:scaleX(1.091);transform-origin:0 0" id="tw67">手作業</div>
<div class="a" style="left:54px;top:850px;width:216px;height:1px;background:#e8e8ec"></div>
<div class="a" style="left:70px;top:862px;width:184px;height:32px;background:#0a7bff;border-radius:6px"></div>
<div class="t" style="left:137px;top:872px;font-size:12px;color:#fff;transform:scaleX(0.833);transform-origin:0 0" id="tw68">もっと見る</div>

<div id="rulT" class="a"></div>
<div id="rulL" class="a"></div>
<div id="cv" class="a"></div>
<div id="page" class="a"></div>
<div id="vsb" class="a"></div>
<div id="rp" class="a"></div>
<div class="a" style="left:1500px;top:162px;width:5px;height:35px;background:#1677ff"></div>
<div id="hsb" class="a"></div>
<div class="a" style="left:271px;top:877px;width:830px;height:9px;background:#cfd0d4;border-radius:5px"></div>
<div class="a" style="left:288px;top:130px;width:1197px;height:17px;overflow:hidden"><div class="a" style="left:-7.8px;top:0px;width:1px;height:17px;background:#e4e4ea"></div><div class="t" style="left:-6.0px;top:2.6px;font-size:10px;color:#858585;transform:scaleX(0.9);transform-origin:0 0">-50</div><div class="a" style="left:22.8px;top:0px;width:1px;height:17px;background:#e4e4ea"></div><div class="t" style="left:24.6px;top:2.6px;font-size:10px;color:#858585;transform:scaleX(0.9);transform-origin:0 0">-40</div><div class="a" style="left:53.4px;top:0px;width:1px;height:17px;background:#e4e4ea"></div><div class="t" style="left:55.2px;top:2.6px;font-size:10px;color:#858585;transform:scaleX(0.9);transform-origin:0 0">-30</div><div class="a" style="left:84.1px;top:0px;width:1px;height:17px;background:#e4e4ea"></div><div class="t" style="left:85.9px;top:2.6px;font-size:10px;color:#858585;transform:scaleX(0.9);transform-origin:0 0">-20</div><div class="a" style="left:114.7px;top:0px;width:1px;height:17px;background:#e4e4ea"></div><div class="t" style="left:116.5px;top:2.6px;font-size:10px;color:#858585;transform:scaleX(0.9);transform-origin:0 0">-10</div><div class="a" style="left:145.3px;top:0px;width:1px;height:17px;background:#e4e4ea"></div><div class="t" style="left:147.1px;top:2.6px;font-size:10px;color:#858585;transform:scaleX(0.9);transform-origin:0 0">0</div><div class="a" style="left:175.9px;top:0px;width:1px;height:17px;background:#e4e4ea"></div><div class="t" style="left:177.7px;top:2.6px;font-size:10px;color:#858585;transform:scaleX(0.9);transform-origin:0 0">10</div><div class="a" style="left:206.5px;top:0px;width:1px;height:17px;background:#e4e4ea"></div><div class="t" style="left:208.3px;top:2.6px;font-size:10px;color:#858585;transform:scaleX(0.9);transform-origin:0 0">20</div><div class="a" style="left:237.2px;top:0px;width:1px;height:17px;background:#e4e4ea"></div><div class="t" style="left:239.0px;top:2.6px;font-size:10px;color:#858585;transform:scaleX(0.9);transform-origin:0 0">30</div><div class="a" style="left:267.8px;top:0px;width:1px;height:17px;background:#e4e4ea"></div><div class="t" style="left:269.6px;top:2.6px;font-size:10px;color:#858585;transform:scaleX(0.9);transform-origin:0 0">40</div><div class="a" style="left:298.4px;top:0px;width:1px;height:17px;background:#e4e4ea"></div><div class="t" style="left:300.2px;top:2.6px;font-size:10px;color:#858585;transform:scaleX(0.9);transform-origin:0 0">50</div><div class="a" style="left:329.0px;top:0px;width:1px;height:17px;background:#e4e4ea"></div><div class="t" style="left:330.8px;top:2.6px;font-size:10px;color:#858585;transform:scaleX(0.9);transform-origin:0 0">60</div><div class="a" style="left:359.6px;top:0px;width:1px;height:17px;background:#e4e4ea"></div><div class="t" style="left:361.4px;top:2.6px;font-size:10px;color:#858585;transform:scaleX(0.9);transform-origin:0 0">70</div><div class="a" style="left:390.3px;top:0px;width:1px;height:17px;background:#e4e4ea"></div><div class="t" style="left:392.1px;top:2.6px;font-size:10px;color:#858585;transform:scaleX(0.9);transform-origin:0 0">80</div><div class="a" style="left:420.9px;top:0px;width:1px;height:17px;background:#e4e4ea"></div><div class="t" style="left:422.7px;top:2.6px;font-size:10px;color:#858585;transform:scaleX(0.9);transform-origin:0 0">90</div><div class="a" style="left:451.5px;top:0px;width:1px;height:17px;background:#e4e4ea"></div><div class="t" style="left:453.3px;top:2.6px;font-size:10px;color:#858585;transform:scaleX(0.9);transform-origin:0 0">100</div><div class="a" style="left:482.1px;top:0px;width:1px;height:17px;background:#e4e4ea"></div><div class="t" style="left:483.9px;top:2.6px;font-size:10px;color:#858585;transform:scaleX(0.9);transform-origin:0 0">110</div><div class="a" style="left:512.7px;top:0px;width:1px;height:17px;background:#e4e4ea"></div><div class="t" style="left:514.5px;top:2.6px;font-size:10px;color:#858585;transform:scaleX(0.9);transform-origin:0 0">120</div><div class="a" style="left:543.4px;top:0px;width:1px;height:17px;background:#e4e4ea"></div><div class="t" style="left:545.2px;top:2.6px;font-size:10px;color:#858585;transform:scaleX(0.9);transform-origin:0 0">130</div><div class="a" style="left:574.0px;top:0px;width:1px;height:17px;background:#e4e4ea"></div><div class="t" style="left:575.8px;top:2.6px;font-size:10px;color:#858585;transform:scaleX(0.9);transform-origin:0 0">140</div><div class="a" style="left:604.6px;top:0px;width:1px;height:17px;background:#e4e4ea"></div><div class="t" style="left:606.4px;top:2.6px;font-size:10px;color:#858585;transform:scaleX(0.9);transform-origin:0 0">150</div><div class="a" style="left:635.2px;top:0px;width:1px;height:17px;background:#e4e4ea"></div><div class="t" style="left:637.0px;top:2.6px;font-size:10px;color:#858585;transform:scaleX(0.9);transform-origin:0 0">160</div><div class="a" style="left:665.8px;top:0px;width:1px;height:17px;background:#e4e4ea"></div><div class="t" style="left:667.6px;top:2.6px;font-size:10px;color:#858585;transform:scaleX(0.9);transform-origin:0 0">170</div><div class="a" style="left:696.5px;top:0px;width:1px;height:17px;background:#e4e4ea"></div><div class="t" style="left:698.3px;top:2.6px;font-size:10px;color:#858585;transform:scaleX(0.9);transform-origin:0 0">180</div><div class="a" style="left:727.1px;top:0px;width:1px;height:17px;background:#e4e4ea"></div><div class="t" style="left:728.9px;top:2.6px;font-size:10px;color:#858585;transform:scaleX(0.9);transform-origin:0 0">190</div><div class="a" style="left:757.7px;top:0px;width:1px;height:17px;background:#e4e4ea"></div><div class="t" style="left:759.5px;top:2.6px;font-size:10px;color:#858585;transform:scaleX(0.9);transform-origin:0 0">200</div><div class="a" style="left:788.3px;top:0px;width:1px;height:17px;background:#e4e4ea"></div><div class="t" style="left:790.1px;top:2.6px;font-size:10px;color:#858585;transform:scaleX(0.9);transform-origin:0 0">210</div><div class="a" style="left:818.9px;top:0px;width:1px;height:17px;background:#e4e4ea"></div><div class="t" style="left:820.7px;top:2.6px;font-size:10px;color:#858585;transform:scaleX(0.9);transform-origin:0 0">220</div><div class="a" style="left:849.6px;top:0px;width:1px;height:17px;background:#e4e4ea"></div><div class="t" style="left:851.4px;top:2.6px;font-size:10px;color:#858585;transform:scaleX(0.9);transform-origin:0 0">230</div><div class="a" style="left:880.2px;top:0px;width:1px;height:17px;background:#e4e4ea"></div><div class="t" style="left:882.0px;top:2.6px;font-size:10px;color:#858585;transform:scaleX(0.9);transform-origin:0 0">240</div><div class="a" style="left:910.8px;top:0px;width:1px;height:17px;background:#e4e4ea"></div><div class="t" style="left:912.6px;top:2.6px;font-size:10px;color:#858585;transform:scaleX(0.9);transform-origin:0 0">250</div><div class="a" style="left:941.4px;top:0px;width:1px;height:17px;background:#e4e4ea"></div><div class="t" style="left:943.2px;top:2.6px;font-size:10px;color:#858585;transform:scaleX(0.9);transform-origin:0 0">260</div><div class="a" style="left:972.0px;top:0px;width:1px;height:17px;background:#e4e4ea"></div><div class="t" style="left:973.8px;top:2.6px;font-size:10px;color:#858585;transform:scaleX(0.9);transform-origin:0 0">270</div><div class="a" style="left:1002.7px;top:0px;width:1px;height:17px;background:#e4e4ea"></div><div class="t" style="left:1004.5px;top:2.6px;font-size:10px;color:#858585;transform:scaleX(0.9);transform-origin:0 0">280</div><div class="a" style="left:1033.3px;top:0px;width:1px;height:17px;background:#e4e4ea"></div><div class="t" style="left:1035.1px;top:2.6px;font-size:10px;color:#858585;transform:scaleX(0.9);transform-origin:0 0">290</div><div class="a" style="left:1063.9px;top:0px;width:1px;height:17px;background:#e4e4ea"></div><div class="t" style="left:1065.7px;top:2.6px;font-size:10px;color:#858585;transform:scaleX(0.9);transform-origin:0 0">300</div><div class="a" style="left:1094.5px;top:0px;width:1px;height:17px;background:#e4e4ea"></div><div class="t" style="left:1096.3px;top:2.6px;font-size:10px;color:#858585;transform:scaleX(0.9);transform-origin:0 0">310</div><div class="a" style="left:1125.1px;top:0px;width:1px;height:17px;background:#e4e4ea"></div><div class="t" style="left:1126.9px;top:2.6px;font-size:10px;color:#858585;transform:scaleX(0.9);transform-origin:0 0">320</div><div class="a" style="left:1155.8px;top:0px;width:1px;height:17px;background:#e4e4ea"></div><div class="t" style="left:1157.6px;top:2.6px;font-size:10px;color:#858585;transform:scaleX(0.9);transform-origin:0 0">330</div><div class="a" style="left:1186.4px;top:0px;width:1px;height:17px;background:#e4e4ea"></div><div class="t" style="left:1188.2px;top:2.6px;font-size:10px;color:#858585;transform:scaleX(0.9);transform-origin:0 0">340</div></div><div class="a" style="left:271px;top:148.3px;width:17px;height:1px;background:#e4e4ea"></div><div class="t" style="left:267.5px;top:148.3px;width:17px;height:7px;font-size:9.5px;color:#858585;writing-mode:vertical-rl;transform:rotate(180deg);display:flex;align-items:center;justify-content:flex-start">0</div><div class="a" style="left:271px;top:178.9px;width:17px;height:1px;background:#e4e4ea"></div><div class="t" style="left:267.5px;top:178.9px;width:17px;height:13px;font-size:9.5px;color:#858585;writing-mode:vertical-rl;transform:rotate(180deg);display:flex;align-items:center;justify-content:flex-start">10</div><div class="a" style="left:271px;top:209.5px;width:17px;height:1px;background:#e4e4ea"></div><div class="t" style="left:267.5px;top:209.5px;width:17px;height:13px;font-size:9.5px;color:#858585;writing-mode:vertical-rl;transform:rotate(180deg);display:flex;align-items:center;justify-content:flex-start">20</div><div class="a" style="left:271px;top:240.2px;width:17px;height:1px;background:#e4e4ea"></div><div class="t" style="left:267.5px;top:240.2px;width:17px;height:13px;font-size:9.5px;color:#858585;writing-mode:vertical-rl;transform:rotate(180deg);display:flex;align-items:center;justify-content:flex-start">30</div><div class="a" style="left:271px;top:270.8px;width:17px;height:1px;background:#e4e4ea"></div><div class="t" style="left:267.5px;top:270.8px;width:17px;height:13px;font-size:9.5px;color:#858585;writing-mode:vertical-rl;transform:rotate(180deg);display:flex;align-items:center;justify-content:flex-start">40</div><div class="a" style="left:271px;top:301.4px;width:17px;height:1px;background:#e4e4ea"></div><div class="t" style="left:267.5px;top:301.4px;width:17px;height:13px;font-size:9.5px;color:#858585;writing-mode:vertical-rl;transform:rotate(180deg);display:flex;align-items:center;justify-content:flex-start">50</div><div class="a" style="left:271px;top:332.0px;width:17px;height:1px;background:#e4e4ea"></div><div class="t" style="left:267.5px;top:332.0px;width:17px;height:13px;font-size:9.5px;color:#858585;writing-mode:vertical-rl;transform:rotate(180deg);display:flex;align-items:center;justify-content:flex-start">60</div><div class="a" style="left:271px;top:362.6px;width:17px;height:1px;background:#e4e4ea"></div><div class="t" style="left:267.5px;top:362.6px;width:17px;height:13px;font-size:9.5px;color:#858585;writing-mode:vertical-rl;transform:rotate(180deg);display:flex;align-items:center;justify-content:flex-start">70</div><div class="a" style="left:271px;top:393.3px;width:17px;height:1px;background:#e4e4ea"></div><div class="t" style="left:267.5px;top:393.3px;width:17px;height:13px;font-size:9.5px;color:#858585;writing-mode:vertical-rl;transform:rotate(180deg);display:flex;align-items:center;justify-content:flex-start">80</div><div class="a" style="left:271px;top:423.9px;width:17px;height:1px;background:#e4e4ea"></div><div class="t" style="left:267.5px;top:423.9px;width:17px;height:13px;font-size:9.5px;color:#858585;writing-mode:vertical-rl;transform:rotate(180deg);display:flex;align-items:center;justify-content:flex-start">90</div><div class="a" style="left:271px;top:454.5px;width:17px;height:1px;background:#e4e4ea"></div><div class="t" style="left:267.5px;top:454.5px;width:17px;height:19px;font-size:9.5px;color:#858585;writing-mode:vertical-rl;transform:rotate(180deg);display:flex;align-items:center;justify-content:flex-start">100</div><div class="a" style="left:271px;top:485.1px;width:17px;height:1px;background:#e4e4ea"></div><div class="t" style="left:267.5px;top:485.1px;width:17px;height:19px;font-size:9.5px;color:#858585;writing-mode:vertical-rl;transform:rotate(180deg);display:flex;align-items:center;justify-content:flex-start">110</div><div class="a" style="left:271px;top:515.7px;width:17px;height:1px;background:#e4e4ea"></div><div class="t" style="left:267.5px;top:515.7px;width:17px;height:19px;font-size:9.5px;color:#858585;writing-mode:vertical-rl;transform:rotate(180deg);display:flex;align-items:center;justify-content:flex-start">120</div><div class="a" style="left:271px;top:546.4px;width:17px;height:1px;background:#e4e4ea"></div><div class="t" style="left:267.5px;top:546.4px;width:17px;height:19px;font-size:9.5px;color:#858585;writing-mode:vertical-rl;transform:rotate(180deg);display:flex;align-items:center;justify-content:flex-start">130</div><div class="a" style="left:271px;top:577.0px;width:17px;height:1px;background:#e4e4ea"></div><div class="t" style="left:267.5px;top:577.0px;width:17px;height:19px;font-size:9.5px;color:#858585;writing-mode:vertical-rl;transform:rotate(180deg);display:flex;align-items:center;justify-content:flex-start">140</div><div class="a" style="left:271px;top:607.6px;width:17px;height:1px;background:#e4e4ea"></div><div class="t" style="left:267.5px;top:607.6px;width:17px;height:19px;font-size:9.5px;color:#858585;writing-mode:vertical-rl;transform:rotate(180deg);display:flex;align-items:center;justify-content:flex-start">150</div><div class="a" style="left:271px;top:638.2px;width:17px;height:1px;background:#e4e4ea"></div><div class="t" style="left:267.5px;top:638.2px;width:17px;height:19px;font-size:9.5px;color:#858585;writing-mode:vertical-rl;transform:rotate(180deg);display:flex;align-items:center;justify-content:flex-start">160</div><div class="a" style="left:271px;top:668.8px;width:17px;height:1px;background:#e4e4ea"></div><div class="t" style="left:267.5px;top:668.8px;width:17px;height:19px;font-size:9.5px;color:#858585;writing-mode:vertical-rl;transform:rotate(180deg);display:flex;align-items:center;justify-content:flex-start">170</div><div class="a" style="left:271px;top:699.5px;width:17px;height:1px;background:#e4e4ea"></div><div class="t" style="left:267.5px;top:699.5px;width:17px;height:19px;font-size:9.5px;color:#858585;writing-mode:vertical-rl;transform:rotate(180deg);display:flex;align-items:center;justify-content:flex-start">180</div><div class="a" style="left:271px;top:730.1px;width:17px;height:1px;background:#e4e4ea"></div><div class="t" style="left:267.5px;top:730.1px;width:17px;height:19px;font-size:9.5px;color:#858585;writing-mode:vertical-rl;transform:rotate(180deg);display:flex;align-items:center;justify-content:flex-start">190</div><div class="a" style="left:271px;top:760.7px;width:17px;height:1px;background:#e4e4ea"></div><div class="t" style="left:267.5px;top:760.7px;width:17px;height:19px;font-size:9.5px;color:#858585;writing-mode:vertical-rl;transform:rotate(180deg);display:flex;align-items:center;justify-content:flex-start">200</div><div class="a" style="left:271px;top:791.3px;width:17px;height:1px;background:#e4e4ea"></div><div class="t" style="left:267.5px;top:791.3px;width:17px;height:19px;font-size:9.5px;color:#858585;writing-mode:vertical-rl;transform:rotate(180deg);display:flex;align-items:center;justify-content:flex-start">210</div><div class="a" style="left:271px;top:821.9px;width:17px;height:1px;background:#e4e4ea"></div><div class="t" style="left:267.5px;top:821.9px;width:17px;height:19px;font-size:9.5px;color:#858585;writing-mode:vertical-rl;transform:rotate(180deg);display:flex;align-items:center;justify-content:flex-start">220</div><div class="a" style="left:271px;top:852.6px;width:17px;height:1px;background:#e4e4ea"></div><div class="t" style="left:267.5px;top:852.6px;width:17px;height:19px;font-size:9.5px;color:#858585;writing-mode:vertical-rl;transform:rotate(180deg);display:flex;align-items:center;justify-content:flex-start">230</div><div class="a" style="left:271px;top:130px;width:17px;height:17px;background:#fff;border-right:1px solid #e4e4ea;border-bottom:1px solid #e3e3e8"></div><div class="a" style="left:1485px;top:130px;width:14px;height:745px;background:#fff;border-left:1px solid #e3e3e8"></div><div class="a" style="left:1487px;top:257px;width:10px;height:538px;background:#cfd0d4;border-radius:5px"></div><div id="pal" class="a"></div><svg style="left:280px;top:890px" width="24" height="16"><path d="M3 7 L8 2 L13 7 L8 12 Z" fill="none" stroke="#222" stroke-width="1.6"/><path d="M3 7 H13 L8 12Z" fill="#222"/><circle cx="13.5" cy="12" r="1.5" fill="#222"/><path d="M17 6 l2.5 2.5 l2.5-2.5z" fill="#666"/></svg><div class="a" style="left:306.0px;top:891px;width:11px;height:14px;background:#a8161f;border-radius:2px"></div><div class="a" style="left:319.1px;top:891px;width:11px;height:14px;background:#c8102e;border-radius:2px"></div><div class="a" style="left:332.2px;top:891px;width:11px;height:14px;background:#e0405a;border-radius:2px"></div><div class="a" style="left:345.4px;top:891px;width:11px;height:14px;background:#ef6680;border-radius:2px"></div><div class="a" style="left:358.5px;top:891px;width:11px;height:14px;background:#f59bab;border-radius:2px"></div><div class="a" style="left:371.6px;top:891px;width:11px;height:14px;background:#257893;border-radius:2px"></div><div class="a" style="left:384.7px;top:891px;width:11px;height:14px;background:#38a4c6;border-radius:2px"></div><div class="a" style="left:397.8px;top:891px;width:11px;height:14px;background:#3fc0de;border-radius:2px"></div><div class="a" style="left:411.0px;top:891px;width:11px;height:14px;background:#5ad1ee;border-radius:2px"></div><div class="a" style="left:424.1px;top:891px;width:11px;height:14px;background:#a5e9fa;border-radius:2px"></div><div class="a" style="left:437.2px;top:891px;width:11px;height:14px;background:#f4512c;border-radius:2px"></div><div class="a" style="left:450.3px;top:891px;width:11px;height:14px;background:#fb7b3a;border-radius:2px"></div><div class="a" style="left:463.4px;top:891px;width:11px;height:14px;background:#fd931f;border-radius:2px"></div><div class="a" style="left:476.6px;top:891px;width:11px;height:14px;background:#fdb515;border-radius:2px"></div><div class="a" style="left:489.7px;top:891px;width:11px;height:14px;background:#fcc65f;border-radius:2px"></div><div class="a" style="left:502.8px;top:891px;width:11px;height:14px;background:#11907d;border-radius:2px"></div><div class="a" style="left:515.9px;top:891px;width:11px;height:14px;background:#14ae94;border-radius:2px"></div><div class="a" style="left:529.0px;top:891px;width:11px;height:14px;background:#1ccaa9;border-radius:2px"></div><div class="a" style="left:542.2px;top:891px;width:11px;height:14px;background:#62d9c4;border-radius:2px"></div><div class="a" style="left:555.3px;top:891px;width:11px;height:14px;background:#8ee8d9;border-radius:2px"></div><div class="a" style="left:568.4px;top:891px;width:11px;height:14px;background:#9a2a5e;border-radius:2px"></div><div class="a" style="left:581.5px;top:891px;width:11px;height:14px;background:#c44b8a;border-radius:2px"></div><div class="a" style="left:594.6px;top:891px;width:11px;height:14px;background:#e06aa9;border-radius:2px"></div><div class="a" style="left:607.8px;top:891px;width:11px;height:14px;background:#f58ac4;border-radius:2px"></div><div class="a" style="left:620.9px;top:891px;width:11px;height:14px;background:#f2c3dc;border-radius:2px"></div><div class="a" style="left:634.0px;top:891px;width:11px;height:14px;background:#5d8514;border-radius:2px"></div><div class="a" style="left:647.1px;top:891px;width:11px;height:14px;background:#76a026;border-radius:2px"></div><div class="a" style="left:660.2px;top:891px;width:11px;height:14px;background:#98bd24;border-radius:2px"></div><div class="a" style="left:673.4px;top:891px;width:11px;height:14px;background:#b3d04a;border-radius:2px"></div><div class="a" style="left:686.5px;top:891px;width:11px;height:14px;background:#d4e08f;border-radius:2px"></div><div class="a" style="left:699.6px;top:891px;width:11px;height:14px;background:#1e2aa6;border-radius:2px"></div><div class="a" style="left:712.7px;top:891px;width:11px;height:14px;background:#3d44dd;border-radius:2px"></div><div class="a" style="left:725.8px;top:891px;width:11px;height:14px;background:#6a45e8;border-radius:2px"></div><div class="a" style="left:739.0px;top:891px;width:11px;height:14px;background:#8b78f0;border-radius:2px"></div><div class="a" style="left:752.1px;top:891px;width:11px;height:14px;background:#a99af3;border-radius:2px"></div><div class="a" style="left:765.2px;top:891px;width:11px;height:14px;background:#fcc412;border-radius:2px"></div><div class="a" style="left:778.3px;top:891px;width:11px;height:14px;background:#fdd93a;border-radius:2px"></div><div class="a" style="left:791.4px;top:891px;width:11px;height:14px;background:#f1e234;border-radius:2px"></div><div class="a" style="left:804.6px;top:891px;width:11px;height:14px;background:#f5ef66;border-radius:2px"></div><div class="a" style="left:817.7px;top:891px;width:11px;height:14px;background:#f7f79a;border-radius:2px"></div><div class="a" style="left:830.8px;top:891px;width:11px;height:14px;background:#9650d6;border-radius:2px"></div><div class="a" style="left:843.9px;top:891px;width:11px;height:14px;background:#c257e6;border-radius:2px"></div><div class="a" style="left:857.0px;top:891px;width:11px;height:14px;background:#d878f0;border-radius:2px"></div><div class="a" style="left:870.2px;top:891px;width:11px;height:14px;background:#c88ef0;border-radius:2px"></div><div class="a" style="left:883.3px;top:891px;width:11px;height:14px;background:#e0b4f5;border-radius:2px"></div><div class="a" style="left:896.4px;top:891px;width:11px;height:14px;background:#2c7c3a;border-radius:2px"></div><div class="a" style="left:909.5px;top:891px;width:11px;height:14px;background:#3fa055;border-radius:2px"></div><div class="a" style="left:922.6px;top:891px;width:11px;height:14px;background:#56a86e;border-radius:2px"></div><div class="a" style="left:935.8px;top:891px;width:11px;height:14px;background:#7dc08c;border-radius:2px"></div><div class="a" style="left:948.9px;top:891px;width:11px;height:14px;background:#a5d6b0;border-radius:2px"></div><div class="a" style="left:962.0px;top:891px;width:11px;height:14px;background:#123f8c;border-radius:2px"></div><div class="a" style="left:975.1px;top:891px;width:11px;height:14px;background:#1a5fc8;border-radius:2px"></div><div class="a" style="left:988.2px;top:891px;width:11px;height:14px;background:#2f7ff0;border-radius:2px"></div><div class="a" style="left:1001.4px;top:891px;width:11px;height:14px;background:#5b9cf5;border-radius:2px"></div><div class="a" style="left:1014.5px;top:891px;width:11px;height:14px;background:#93c2fa;border-radius:2px"></div><div class="a" style="left:1027.6px;top:891px;width:11px;height:14px;background:#0d5e6e;border-radius:2px"></div><div class="a" style="left:1040.7px;top:891px;width:11px;height:14px;background:#12849a;border-radius:2px"></div><div class="a" style="left:1053.8px;top:891px;width:11px;height:14px;background:#1aa6bf;border-radius:2px"></div><div class="a" style="left:1067.0px;top:891px;width:11px;height:14px;background:#48c4d8;border-radius:2px"></div><div class="a" style="left:1080.1px;top:891px;width:11px;height:14px;background:#8adbe8;border-radius:2px"></div><div class="a" style="left:1093.2px;top:891px;width:11px;height:14px;background:#5b3a9e;border-radius:2px"></div><div class="a" style="left:1106.3px;top:891px;width:11px;height:14px;background:#7b55c8;border-radius:2px"></div><div class="a" style="left:1119.4px;top:891px;width:11px;height:14px;background:#9c7ae0;border-radius:2px"></div><div class="a" style="left:1132.6px;top:891px;width:11px;height:14px;background:#bba3ee;border-radius:2px"></div><div class="a" style="left:1145.7px;top:891px;width:11px;height:14px;background:#d9ccf7;border-radius:2px"></div><div class="a" style="left:1158.8px;top:891px;width:11px;height:14px;background:#1677ff;border-radius:2px"></div><div class="a" style="left:1171.9px;top:891px;width:11px;height:14px;background:#35a0ff;border-radius:2px"></div><div class="a" style="left:1185.0px;top:891px;width:11px;height:14px;background:#6ab8ff;border-radius:2px"></div><div class="a" style="left:1198.2px;top:891px;width:11px;height:14px;background:#35c3f5;border-radius:2px"></div><div class="a" style="left:1211.3px;top:891px;width:11px;height:14px;background:#5bd8f2;border-radius:2px"></div><div class="a" style="left:1224.4px;top:891px;width:11px;height:14px;background:#7a4a2e;border-radius:2px"></div><div class="a" style="left:1237.5px;top:891px;width:11px;height:14px;background:#9c6040;border-radius:2px"></div><div class="a" style="left:1250.6px;top:891px;width:11px;height:14px;background:#b5704a;border-radius:2px"></div><div class="a" style="left:1263.8px;top:891px;width:11px;height:14px;background:#d4845a;border-radius:2px"></div><div class="a" style="left:1276.9px;top:891px;width:11px;height:14px;background:#f0966a;border-radius:2px"></div><div class="a" style="left:1290.0px;top:891px;width:11px;height:14px;background:#8a7c70;border-radius:2px"></div><div class="a" style="left:1303.1px;top:891px;width:11px;height:14px;background:#b3a898;border-radius:2px"></div><div class="a" style="left:1316.2px;top:891px;width:11px;height:14px;background:#cfcbb5;border-radius:2px"></div><div class="a" style="left:1329.4px;top:891px;width:11px;height:14px;background:#e5e0cc;border-radius:2px"></div><div class="a" style="left:1342.5px;top:891px;width:11px;height:14px;background:#f1efdc;border-radius:2px"></div><div class="a" style="left:1355.6px;top:891px;width:11px;height:14px;background:#1c1c1c;border-radius:2px"></div><div class="a" style="left:1368.7px;top:891px;width:11px;height:14px;background:#2e2e2e;border-radius:2px"></div><div class="a" style="left:1381.8px;top:891px;width:11px;height:14px;background:#404040;border-radius:2px"></div><div class="a" style="left:1395.0px;top:891px;width:11px;height:14px;background:#5a5a5a;border-radius:2px"></div><div class="a" style="left:1408.1px;top:891px;width:11px;height:14px;background:#7a7a7a;border-radius:2px"></div><div class="a" style="left:1421.2px;top:891px;width:11px;height:14px;background:#9e9e9e;border-radius:2px"></div><div class="a" style="left:1434.3px;top:891px;width:11px;height:14px;background:#bdbdbd;border-radius:2px"></div><div class="a" style="left:1447.4px;top:891px;width:11px;height:14px;background:#d0d0d0;border-radius:2px"></div><div class="a" style="left:1460.6px;top:891px;width:11px;height:14px;background:#e2e2e2;border-radius:2px"></div><div class="a" style="left:1473.7px;top:891px;width:11px;height:14px;background:#f0f0f0;border-radius:2px"></div><div class="a" style="left:1486.8px;top:891px;width:11px;height:14px;background:#ffffff;border-radius:2px;box-shadow:inset 0 0 0 1px #eee"></div>
<svg style="left:0;top:0" width="1513" height="992" viewBox="0 0 1513 992"><defs><clipPath id="cvc"><rect x="288" y="147" width="1197" height="728"/></clipPath></defs><g clip-path="url(#cvc)"><path d="M1484 179.5 H464.5 V760.5 H1484" fill="none" stroke="#dadada" stroke-width="1"/><rect x="466.5" y="207.5" width="814" height="557" fill="none" stroke="#bdbdbd" stroke-width="1"/><rect x="472.5" y="213.5" width="802" height="545" fill="none" stroke="#bdbdbd" stroke-width="1"/><rect x="482.5" y="207.5" width="808" height="550.8" fill="none" stroke="#bcbcbc" stroke-width="5.4"/><path d="M1290 498.3 H831 V525" fill="none" stroke="#bcbcbc" stroke-width="7"/><rect x="827.2" y="648.8" width="7.6" height="108" fill="#bcbcbc"/><rect x="759.5" y="755.3" width="6" height="3" fill="#fff"/><rect x="1287.5" y="317" width="6" height="128" fill="#fff" stroke="#ececec" stroke-width="1"/><rect x="1287.5" y="538" width="6" height="127" fill="#fff" stroke="#ececec" stroke-width="1"/><path d="M1342.5 147 V790" stroke="#a8a8a8" stroke-width="1" stroke-dasharray="7.5 3.5"/><rect x="525.5" y="268.5" width="83.0" height="122.80000000000001" fill="#fde2d3" stroke="#1c1f4e" stroke-width="1.3"/><circle cx="566.3" cy="355.3" r="15" fill="#fff" stroke="#1c1f4e" stroke-width="1"/><rect x="659.5" y="240.3" width="204.10000000000002" height="95.0" fill="#fde2d3" stroke="#1c1f4e" stroke-width="1.3"/><circle cx="761.3" cy="308.3" r="15" fill="#fff" stroke="#1c1f4e" stroke-width="1"/><rect x="913.3" y="240.3" width="180.10000000000014" height="110.89999999999998" fill="#fde2d3" stroke="#1c1f4e" stroke-width="1.3"/><circle cx="1003.3" cy="320.2" r="15" fill="#fff" stroke="#1c1f4e" stroke-width="1"/><rect x="1152.5" y="240.3" width="97.09999999999991" height="61.0" fill="#94c3fb" stroke="#1c1f4e" stroke-width="1.3"/><path d="M1188.5 271 H1214.8 L1201.6 292.8Z" fill="#fff" stroke="#1c1f4e" stroke-width="1"/><rect x="525.5" y="440.4" width="114.89999999999998" height="150.89999999999998" fill="#fff" stroke="#1c1f4e" stroke-width="1.3"/><path d="M582.4 525.8 L603.4 547.1 L582.4 568.5 L561.4 547.1Z" fill="#fff" stroke="#1c1f4e" stroke-width="1"/><rect x="525.5" y="640.3" width="204.0" height="96.0" fill="#fde2d3" stroke="#1c1f4e" stroke-width="1.3"/><circle cx="627.5" cy="708.6" r="14.5" fill="#fff" stroke="#1c1f4e" stroke-width="1"/><rect x="882.5" y="655.5" width="112.89999999999998" height="85.0" fill="#fff" stroke="#1c1f4e" stroke-width="1.3"/><rect x="898.3" y="699.3" width="30" height="30" fill="#fff" stroke="#1c1f4e" stroke-width="1.2"/><path d="M948 714 L944 718 L948 722" fill="none" stroke="#1c1f4e" stroke-width="1"/><rect x="1076" y="653" width="137.5" height="87.5" fill="#94c3fb" stroke="#1c1f4e" stroke-width="1.3"/><path d="M1152.5 270.3 C1123.25 270.3 1123.25 295.1 1099 295.1" fill="none" stroke="#2a2a2a" stroke-width="1"/><path d="M1094.0 295.1 L1100.0 292.1 L1100.0 298.1Z" fill="#111"/><path d="M913.3 295.5 C888.75 295.5 888.75 287.4 869.2 287.4" fill="none" stroke="#2a2a2a" stroke-width="1"/><path d="M864.2 287.4 L870.2 284.4 L870.2 290.4Z" fill="#111"/><path d="M659.5 287.3 C634.35 287.3 634.35 329.3 614.2 329.3" fill="none" stroke="#2a2a2a" stroke-width="1"/><path d="M609.2 329.3 L615.2 326.3 L615.2 332.3Z" fill="#111"/><path d="M566.4 391.3 C566.4 415.75 582.4 415.75 582.4 435.2" fill="none" stroke="#2a2a2a" stroke-width="1"/><path d="M582.4 440.2 L579.4 434.2 L585.4 434.2Z" fill="#111"/><path d="M582.3 591.3 C582.3 615.75 627.4 615.75 627.4 635.2" fill="none" stroke="#2a2a2a" stroke-width="1"/><path d="M627.4 640.2 L624.4 634.2 L630.4 634.2Z" fill="#111"/><path d="M729.5 687 C792 524 850 551 934 651" fill="none" stroke="#2a2a2a" stroke-width="1"/><path d="M937.3 655.2 L931.1 652.5 L935.7 648.7Z" fill="#111"/><path d="M1339.4 387.2 H1274 C1215 387 1201 360 1201.2 307" fill="none" stroke="#2a2a2a" stroke-width="1"/><path d="M1201.2 301.7 L1204.2 307.7 L1198.2 307.7Z" fill="#111"/><path d="M1146 653 C1190 604 1205 576 1274 575.5 L1340 576.6" fill="none" stroke="#2a2a2a" stroke-width="1"/><path d="M1345.9 576.6 L1339.9 579.6 L1339.9 573.6Z" fill="#111"/><path d="M1291.5 319.5 V381.8 M1289.5 381.8 V441.8" stroke="#111" stroke-width="1" fill="none"/><rect x="1287.5" y="313.5" width="6" height="6.5" fill="#fff" stroke="#111" stroke-width="1"/><rect x="1288.3" y="380.3" width="5" height="3.2" fill="#fff" stroke="#111" stroke-width="1"/><rect x="1287.5" y="441.3" width="6" height="7" fill="#fff" stroke="#111" stroke-width="1"/><path d="M1291.5 540 V602.8 M1289.5 602.8 V662.5" stroke="#111" stroke-width="1" fill="none"/><rect x="1287.5" y="534" width="6" height="6.5" fill="#fff" stroke="#111" stroke-width="1"/><rect x="1288.3" y="601.3" width="5" height="3.2" fill="#fff" stroke="#111" stroke-width="1"/><rect x="1287.5" y="662.0" width="6" height="7" fill="#fff" stroke="#111" stroke-width="1"/></g></svg>
<div class="t" style="left:540.5px;top:310.4px;font-size:13px;color:#111;font-family:'Liberation Serif',serif;transform:scaleX(1.021);transform-origin:0 0" id="tw69">加工機 C</div><div class="t" style="left:735.3px;top:268.2px;font-size:13px;color:#111;font-family:'Liberation Serif',serif;transform:scaleX(1.021);transform-origin:0 0" id="tw70">加工機 B</div><div class="t" style="left:977.3px;top:275px;font-size:13px;color:#111;font-family:'Liberation Serif',serif;transform:scaleX(1.007);transform-origin:0 0" id="tw71">加工機 A</div><div class="t" style="left:1175.0px;top:250.7px;font-size:13px;color:#111;font-family:'Liberation Serif',serif;transform:scaleX(1.000);transform-origin:0 0" id="tw72">材料置場</div><div class="t" style="left:563.0px;top:495.8px;font-size:13px;color:#111;font-family:'Liberation Serif',serif;transform:scaleX(1.000);transform-origin:0 0" id="tw73">作業台</div><div class="t" style="left:601.5px;top:669px;font-size:13px;color:#111;font-family:'Liberation Serif',serif;transform:scaleX(1.007);transform-origin:0 0" id="tw74">加工機 D</div><div class="t" style="left:918.5px;top:677px;font-size:13px;color:#111;font-family:'Liberation Serif',serif;transform:scaleX(1.000);transform-origin:0 0" id="tw75">作業台</div><div class="t" style="left:1355.6px;top:380px;font-size:13px;color:#111;transform:scaleX(1.000);transform-origin:0 0" id="tw76">材料入荷</div><div class="t" style="left:1357px;top:569.5px;font-size:13px;color:#111;transform:scaleX(1.000);transform-origin:0 0" id="tw77">製品出荷</div>
<div id="stat" class="a"></div>
<svg style="left:14px;top:914px" width="24" height="16"><path d="M2 2 V14 M22 2 V14" stroke="#333" stroke-width="1.5"/><rect x="5.5" y="2.5" width="13" height="11" fill="none" stroke="#333" stroke-width="1.5"/></svg>
<div class="a" style="left:46px;top:912px;width:1px;height:22px;background:#dedfe6"></div>
<div class="t" style="left:63px;top:916px;font-size:12px;color:#333;transform:scaleX(0.900);transform-origin:0 0" id="tw78">ページ-1</div>
<svg style="left:154px;top:917px" width="10" height="8"><path d="M1 1.5 h7 l-3.5 4z" fill="#777"/></svg>
<div class="a" style="left:175px;top:912px;width:1px;height:22px;background:#dedfe6"></div>
<svg style="left:189px;top:915px" width="14" height="14"><path d="M7 1 V13 M1 7 H13" stroke="#333" stroke-width="1.4"/></svg>
<div class="a" style="left:216px;top:912px;width:1px;height:22px;background:#dedfe6"></div>
<div class="t" style="left:234px;top:916px;font-size:12px;color:#1677ff;transform:scaleX(0.878);transform-origin:0 0" id="tw79">ページ-1</div>
<div class="a" style="left:289px;top:912px;width:1px;height:22px;background:#dedfe6"></div>
<div class="t" style="left:945px;top:917px;font-size:12px;color:#444;transform:scaleX(0.985);transform-origin:0 0" id="tw80">図形の個数 : 37.5</div>
<div class="a" style="left:1055px;top:910px;width:34px;height:21px;background:#e4e8f2;border-radius:4px"></div>
<svg style="left:1056px;top:911px" width="34" height="22"><path d="M10 3 L18 7.5 L10 12 L2 7.5Z" fill="none" stroke="#333" stroke-width="1.4" stroke-linejoin="round"/><path d="M2 11 L10 15.5 L18 11" fill="none" stroke="#333" stroke-width="1.4" stroke-linejoin="round"/><path d="M23.5 9 h6 l-3 3.5z" fill="#777"/></svg>
<svg style="left:1100px;top:913px" width="18" height="18"><path d="M1.5 5 V1.5 H5 M13 1.5 H16.5 V5 M16.5 13 V16.5 H13 M5 16.5 H1.5 V13" fill="none" stroke="#333" stroke-width="1.5"/><rect x="5.5" y="5.5" width="7" height="7" fill="none" stroke="#333" stroke-width="1.5"/></svg>
<div class="t" style="left:1125px;top:916px;font-size:13px;color:#222;transform:scaleX(0.846);transform-origin:0 0" id="tw81">全画面モード</div>
<svg style="left:1201px;top:913px" width="20" height="20"><circle cx="10" cy="9.5" r="7.5" fill="none" stroke="#333" stroke-width="1.4"/><path d="M8 6 L13 9.5 L8 13Z" fill="none" stroke="#333" stroke-width="1.3" stroke-linejoin="round"/></svg>
<div class="a" style="left:1234px;top:912px;width:1px;height:22px;background:#dedfe6"></div>
<div class="a" style="left:1242px;top:921px;width:12px;height:1.5px;background:#333"></div>
<div class="a" style="left:1264px;top:920px;width:97px;height:3px;background:#fff;border-radius:2px"></div>
<div class="a" style="left:1264px;top:920px;width:20px;height:3px;background:#333;border-radius:2px"></div>
<div class="a" style="left:1278px;top:916px;width:12px;height:12px;background:#fff;border:2.2px solid #333;border-radius:50%"></div>
<svg style="left:1369px;top:915px" width="14" height="14"><path d="M7 1 V13 M1 7 H13" stroke="#333" stroke-width="1.4"/></svg>
<div class="t" style="left:1403px;top:917px;font-size:12px;color:#444;transform:scaleX(0.874);transform-origin:0 0" id="tw82">81%</div>
<svg style="left:1435px;top:918px" width="8" height="6"><path d="M1 1 h6 l-3 3.5z" fill="#777"/></svg>
<div class="a" style="left:1453px;top:912px;width:1px;height:22px;background:#dedfe6"></div>
<svg style="left:1465px;top:913px" width="18" height="18"><path d="M1.5 3.5 L6 1.5 L11.5 3.5 L16.5 1.5 V14.5 L11.5 16.5 L6 14.5 L1.5 16.5Z M6 1.5 V14.5 M11.5 3.5 V16.5" fill="none" stroke="#333" stroke-width="1.4" stroke-linejoin="round"/></svg>
<svg style="left:1498px;top:913px" width="8" height="18"><path d="M7 1.5 H1.5 V16.5 H7" fill="none" stroke="#333" stroke-width="1.4"/><rect x="4" y="5" width="4" height="8" fill="none" stroke="#333" stroke-width="1.3"/></svg>
<div class="a" style="left:1366px;top:931px;width:147px;height:12px;background:#fff"></div>
<!-- red annotations -->
<svg style="left:0;top:0" width="1513" height="992"><path d="M901.5 916 H961.5 V906.5 L1023 923 L961.5 937.5 V930.7 H901.5 Z" fill="none" stroke="#e3141c" stroke-width="2.8" stroke-linejoin="miter"/><rect x="1043.3" y="905.5" width="49" height="31.5" fill="none" stroke="#e3141c" stroke-width="2.8"/></svg>
<!-- AI pill -->
<div class="a" style="left:1379px;top:818px;width:88px;height:40px;background:#fff;border-radius:20px;box-shadow:0 2px 8px rgba(0,0,0,0.10)"></div>
<svg style="left:1393px;top:827px" width="22" height="22"><defs><linearGradient id="g1" x1="0" y1="0" x2="1" y2="1"><stop offset="0" stop-color="#7b4df6"/><stop offset="1" stop-color="#3b7cff"/></linearGradient></defs><path d="M3.5 6.2 L6.2 3.8 L14.8 14.5 L12.2 16.8 Z M4.8 8 L7.8 5.5" fill="none" stroke="url(#g1)" stroke-width="1.5" stroke-linejoin="round"/><path d="M6.8 1.5 l.9 1.2-.9 1.2-.9-1.2z M13 4 Q13.3 5.9 15 6.3 Q13.3 6.7 13 8.6 Q12.7 6.7 11 6.3 Q12.7 5.9 13 4Z M2.5 10.5 Q2.7 11.9 4 12.2 Q2.7 12.5 2.5 13.9 Q2.3 12.5 1 12.2 Q2.3 11.9 2.5 10.5Z" fill="#6a5cf5"/></svg>
<div class="a" style="left:1423px;top:828px;width:1px;height:20px;background:#e3e3e8"></div>
<svg style="left:1432px;top:826px" width="24" height="24"><defs><linearGradient id="g2" x1="0" y1="0" x2="1" y2="1"><stop offset="0" stop-color="#3b7cff"/><stop offset="1" stop-color="#8a3ff0"/></linearGradient></defs><path d="M10.5 4 Q11.2 11.8 18.5 13 Q11.2 14.2 10.5 22 Q9.8 14.2 2.5 13 Q9.8 11.8 10.5 4Z" fill="url(#g2)"/><path d="M18 1.5 Q18.3 4 21 4.5 Q18.3 5 18 7.5 Q17.7 5 15 4.5 Q17.7 4 18 1.5Z" fill="#3b7cff"/></svg>

<div class="a" style="left:948px;top:667px;width:248px;height:238px;background:#fff;border-radius:9px;box-shadow:0 3px 14px rgba(0,0,0,0.13),0 0 2px rgba(0,0,0,0.06)"></div>
<div class="t" style="left:963px;top:677px;font-size:13px;color:#222;font-weight:bold;transform:scaleX(0.731);transform-origin:0 0" id="tw83">レイヤー</div>
<svg style="left:1172px;top:676px" width="16" height="16"><path d="M8.5 2 L14 7.5 L12.5 8.5 L10.5 8 L8.5 10 L8.5 12.5 L7.5 13.5 L2.5 8.5 L3.5 7.5 L6 7.5 L8 5.5 L7.5 3.5Z" fill="#333"/><path d="M5 11 L2 14" stroke="#333" stroke-width="1.4"/></svg>
<div class="a" style="left:948px;top:698px;width:248px;height:1px;background:#ececf0"></div>
<div class="t" style="left:968px;top:730px;font-size:12px;color:#222;font-weight:bold;transform:scaleX(0.833);transform-origin:0 0" id="tw84">新規レイヤー</div>
<svg style="left:1158px;top:726px" width="20" height="20"><circle cx="9.8" cy="9.8" r="7.6" fill="none" stroke="#333" stroke-width="1.9"/><path d="M9.8 5.5 V14.1 M5.5 9.8 H14.1" stroke="#333" stroke-width="1.9"/></svg>
<div class="a" style="left:956px;top:756px;width:232px;height:64px;background:#eaedf5;border-radius:7px"></div>
<div class="t" style="left:966px;top:768px;font-size:13px;color:#222;font-weight:bold;transform:scaleX(0.787);transform-origin:0 0" id="tw85">レイヤー-1</div>
<div class="t" style="left:966px;top:796px;font-size:12.5px;color:#333;transform:scaleX(0.974);transform-origin:0 0" id="tw86">図形の数: 37</div>
<div class="t" style="left:966px;top:860px;font-size:12.5px;color:#333;transform:scaleX(0.971);transform-origin:0 0" id="tw87">図形の数: 0</div>
<div class="t" style="left:966px;top:832px;font-size:13px;color:#222;font-weight:bold;transform:scaleX(0.962);transform-origin:0 0" id="tw88">背景</div>
<svg style="left:1064px;top:792px" width="20" height="20"><path d="M2 10 Q10 2.5 18 10 Q10 17.5 2 10Z" fill="none" stroke="#555" stroke-width="1.4"/><circle cx="10" cy="10" r="2.3" fill="none" stroke="#555" stroke-width="1.4"/></svg><svg style="left:1096px;top:792px" width="20" height="20"><path d="M6.5 9 V6 A3.5 3.5 0 0 1 13.5 6" fill="none" stroke="#555" stroke-width="1.4"/><rect x="4" y="9" width="12" height="8.5" rx="1" fill="none" stroke="#555" stroke-width="1.4"/><circle cx="10" cy="13.3" r="1" fill="#555"/></svg><svg style="left:1128px;top:792px" width="20" height="20"><circle cx="10" cy="10" r="7.1" fill="#0a7bff"/><circle cx="10" cy="10" r="3" fill="#fff"/></svg><svg style="left:1160px;top:792px" width="20" height="20"><path d="M6 7 V3.5 H14 V7" fill="none" stroke="#555" stroke-width="1.4"/><path d="M6 15.5 H3.5 V7.5 H16.5 V15.5 H14" fill="none" stroke="#555" stroke-width="1.4" stroke-linejoin="round"/><rect x="6" y="12" width="8" height="5" fill="none" stroke="#555" stroke-width="1.4"/><circle cx="14" cy="10" r=".8" fill="#555"/></svg><svg style="left:1064px;top:856.5px" width="20" height="20"><path d="M2 10 Q10 2.5 18 10 Q10 17.5 2 10Z" fill="none" stroke="#555" stroke-width="1.4"/><circle cx="10" cy="10" r="2.3" fill="none" stroke="#555" stroke-width="1.4"/></svg><svg style="left:1096px;top:856.5px" width="20" height="20"><path d="M6.5 9 V6.5 A3.5 3.5 0 0 1 13.5 6.5 V9" fill="none" stroke="#555" stroke-width="1.4"/><rect x="4" y="9" width="12" height="8.5" rx="1" fill="none" stroke="#555" stroke-width="1.4"/><circle cx="10" cy="13.3" r="1" fill="#555"/></svg><svg style="left:1128px;top:856.5px" width="20" height="20"><circle cx="10" cy="10" r="6.8" fill="#fff" stroke="#dddde2" stroke-width="1"/></svg><svg style="left:1160px;top:856.5px" width="20" height="20"><path d="M6 7 V3.5 H14 V7" fill="none" stroke="#555" stroke-width="1.4"/><path d="M6 15.5 H3.5 V7.5 H16.5 V15.5 H14" fill="none" stroke="#555" stroke-width="1.4" stroke-linejoin="round"/><rect x="6" y="12" width="8" height="5" fill="none" stroke="#555" stroke-width="1.4"/><circle cx="14" cy="10" r=".8" fill="#555"/></svg>

<script>(function(){var W=[35,28,37,27,43,55,51,94,24,23,35,35,23,48,32,24,47,25,24,31,25,22,58,22,45,20,34,20,32,36,30,42,24,35,79,77,23,61,48,82,24,24,24,24,26,54,50,42,32,32,22,22,43,17,50,45,42,56,22,56,22,54,24,52,23,23,36,50,52,52,52,52,39,52,39,52,52,42,41,92,66,21,38,60,50,71,64,25];for(var i=0;i<W.length;i++){var e=document.getElementById("tw"+(i+1));if(!e)continue;e.style.transform="none";var w=e.getBoundingClientRect().width;if(w>0){e.style.transform="scaleX("+(W[i]/w).toFixed(4)+")";}}})();</script>
</body></html>
